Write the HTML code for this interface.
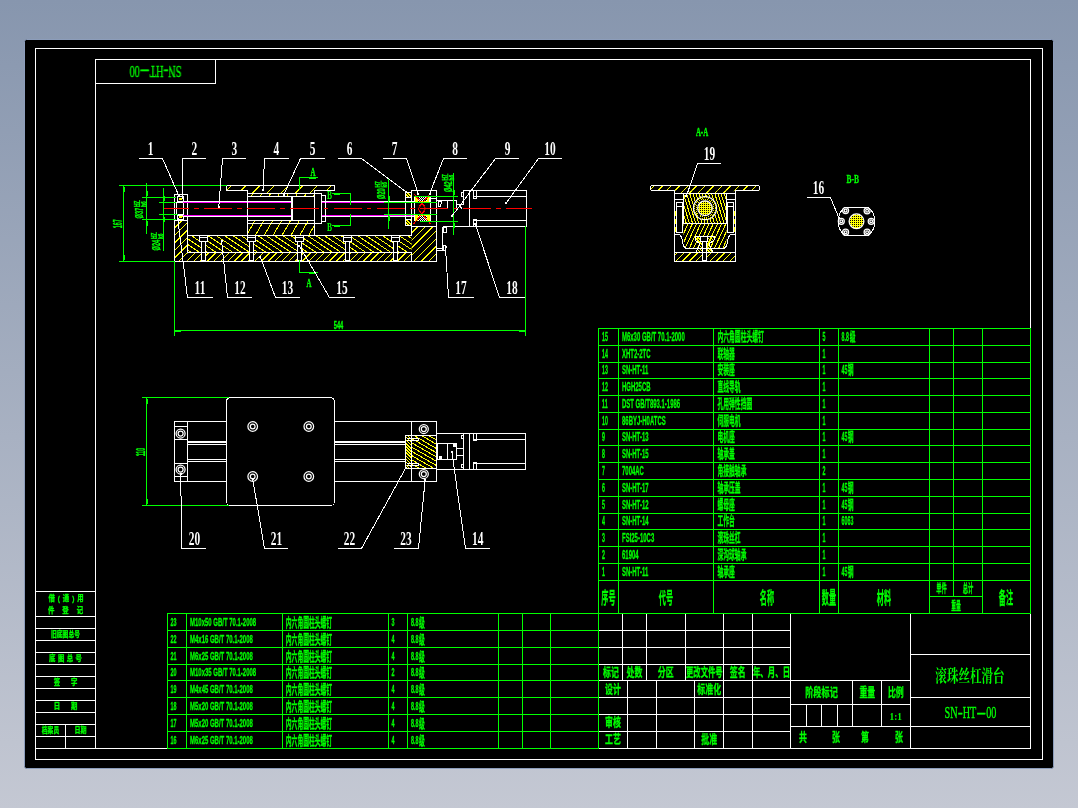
<!DOCTYPE html>
<html lang="zh"><head><meta charset="utf-8"><title>滚珠丝杠滑台 SN-HT-00</title>
<style>html,body{margin:0;padding:0;background:#8c9ab2;overflow:hidden}svg{display:block}text{white-space:pre}</style></head><body>
<svg width="1078" height="808" viewBox="0 0 1078 808">
<defs>
<linearGradient id="bg" x1="0" y1="0" x2="0" y2="1"><stop offset="0" stop-color="#8796ae"/><stop offset="1" stop-color="#c4c8d3"/></linearGradient>
<pattern id="dots" width="2" height="2" patternUnits="userSpaceOnUse"><rect x="0" y="0" width="2" height="2" fill="#ffff00"/><rect x="0" y="0" width="1" height="1" fill="#000"/></pattern>
</defs>
<rect x="0" y="0" width="1078" height="808" fill="url(#bg)"/>
<rect x="24.5" y="39.5" width="1029" height="729" rx="2" fill="#000" stroke="#8c9dbb" stroke-width="1"/>
<g shape-rendering="crispEdges" fill="none" stroke-width="1" stroke-linecap="square">
<rect x="35.5" y="48.5" width="1007" height="711" stroke="#ffffff" fill="none"/>
<rect x="95.5" y="59.5" width="935" height="689" stroke="#ffffff" fill="none"/>
<line x1="95.5" y1="83.5" x2="215.5" y2="83.5" stroke="#ffffff"/>
<line x1="215.5" y1="59.5" x2="215.5" y2="83.5" stroke="#ffffff"/>
<line x1="35.5" y1="591.5" x2="95.5" y2="591.5" stroke="#ffffff"/>
<line x1="35.5" y1="616.5" x2="95.5" y2="616.5" stroke="#ffffff"/>
<line x1="35.5" y1="628.5" x2="95.5" y2="628.5" stroke="#ffffff"/>
<line x1="35.5" y1="640.5" x2="95.5" y2="640.5" stroke="#ffffff"/>
<line x1="35.5" y1="652.5" x2="95.5" y2="652.5" stroke="#ffffff"/>
<line x1="35.5" y1="664.5" x2="95.5" y2="664.5" stroke="#ffffff"/>
<line x1="35.5" y1="676.5" x2="95.5" y2="676.5" stroke="#ffffff"/>
<line x1="35.5" y1="688.5" x2="95.5" y2="688.5" stroke="#ffffff"/>
<line x1="35.5" y1="700.5" x2="95.5" y2="700.5" stroke="#ffffff"/>
<line x1="35.5" y1="712.5" x2="95.5" y2="712.5" stroke="#ffffff"/>
<line x1="35.5" y1="724.5" x2="95.5" y2="724.5" stroke="#ffffff"/>
<line x1="35.5" y1="736.5" x2="95.5" y2="736.5" stroke="#ffffff"/>
<line x1="65.5" y1="724.5" x2="65.5" y2="748.5" stroke="#ffffff"/>
<line x1="35.5" y1="748.5" x2="95.5" y2="748.5" stroke="#ffffff"/>
<clipPath id="c1"><path d="M174.5 220.5 L187.5 220.5 L187.5 261.5 L174.5 261.5 Z"/></clipPath>
<path clip-path="url(#c1)" d="M151.51 243.34 L183.34 211.51 M155.29 247.12 L187.12 215.29 M159.08 250.9 L190.9 219.08 M162.86 254.69 L194.69 222.86 M166.64 258.47 L198.47 226.64 M170.43 262.25 L202.25 230.43 M174.21 266.04 L206.04 234.21 M177.99 269.82 L209.82 237.99" stroke="#ffff00" fill="none"/>
<clipPath id="c2"><path d="M187.5 252.5 L411.5 252.5 L411.5 261.5 L187.5 261.5 Z"/></clipPath>
<path clip-path="url(#c2)" d="M161.9 279.33 L321.83 119.4 M165.29 282.73 L325.23 122.79 M168.69 286.12 L328.62 126.19 M172.08 289.52 L332.02 129.58 M175.48 292.91 L335.41 132.98 M178.87 296.3 L338.8 136.37 M182.27 299.7 L342.2 139.77 M185.66 303.09 L345.59 143.16 M189.05 306.49 L348.99 146.55 M192.45 309.88 L352.38 149.95 M195.84 313.28 L355.78 153.34 M199.24 316.67 L359.17 156.74 M202.63 320.06 L362.56 160.13 M206.02 323.46 L365.96 163.52 M209.42 326.85 L369.35 166.92 M212.81 330.25 L372.75 170.31 M216.21 333.64 L376.14 173.71 M219.6 337.03 L379.53 177.1 M222.99 340.43 L382.93 180.49 M226.39 343.82 L386.32 183.89 M229.78 347.22 L389.72 187.28 M233.18 350.61 L393.11 190.68 M236.57 354 L396.5 194.07 M239.96 357.4 L399.9 197.46 M243.36 360.79 L403.29 200.86 M246.75 364.19 L406.69 204.25 M250.15 367.58 L410.08 207.65 M253.54 370.98 L413.48 211.04 M256.94 374.37 L416.87 214.44 M260.33 377.76 L420.26 217.83 M263.72 381.16 L423.66 221.22 M267.12 384.55 L427.05 224.62 M270.51 387.95 L430.45 228.01 M273.91 391.34 L433.84 231.41 M277.3 394.73 L437.23 234.8" stroke="#ffff00" fill="none"/>
<clipPath id="c3"><path d="M187.5 235.5 L411.5 235.5 L411.5 252.5 L187.5 252.5 Z"/></clipPath>
<path clip-path="url(#c3)" d="M243.22 124.79 L431.11 251.53 M240.62 128.64 L428.51 255.38 M238.02 132.5 L425.91 259.24 M235.42 136.35 L423.31 263.09 M232.82 140.21 L420.71 266.95 M230.22 144.06 L418.11 270.8 M227.62 147.92 L415.51 274.66 M225.02 151.77 L412.91 278.51 M222.42 155.63 L410.31 282.37 M219.82 159.48 L407.71 286.22 M217.21 163.34 L405.11 290.08 M214.61 167.19 L402.51 293.93 M212.01 171.05 L399.91 297.79 M209.41 174.91 L397.31 301.64 M206.81 178.76 L394.71 305.5 M204.21 182.62 L392.11 309.35 M201.61 186.47 L389.51 313.21 M199.01 190.33 L386.91 317.06 M196.41 194.18 L384.31 320.92 M193.81 198.04 L381.71 324.77 M191.21 201.89 L379.11 328.63 M188.61 205.75 L376.51 332.48 M186.01 209.6 L373.91 336.34 M183.41 213.46 L371.31 340.19 M180.81 217.31 L368.71 344.05 M178.21 221.17 L366.11 347.9 M175.61 225.02 L363.51 351.76 M173.01 228.88 L360.91 355.61 M170.41 232.73 L358.31 359.47 M167.81 236.59 L355.71 363.32" stroke="#ffff00" fill="none"/>
<clipPath id="c4"><path d="M411.5 226.5 L436.5 226.5 L436.5 261.5 L411.5 261.5 Z"/></clipPath>
<path clip-path="url(#c4)" d="M396.35 248.18 L428.18 216.35 M400.13 251.96 L431.96 220.13 M403.92 255.74 L435.74 223.92 M407.7 259.53 L439.53 227.7 M411.48 263.31 L443.31 231.48 M415.27 267.09 L447.09 235.27 M419.05 270.88 L450.88 239.05 M422.83 274.66 L454.66 242.83" stroke="#ffff00" fill="none"/>
<clipPath id="c5"><path d="M226.5 185.5 L334.5 185.5 L334.5 190.5 L314.5 190.5 L314.5 193.5 L247.5 193.5 L247.5 190.5 L226.5 190.5 Z"/></clipPath>
<path clip-path="url(#c5)" d="M215.03 202.02 L293.02 124.03 M222.17 209.16 L300.16 131.17 M229.31 216.3 L307.3 138.31 M236.46 223.45 L314.45 145.46 M243.6 230.59 L321.59 152.6 M250.74 237.73 L328.73 159.74 M257.88 244.87 L335.87 166.88 M265.02 252.01 L343.01 174.02" stroke="#ffff00" fill="none"/>
<clipPath id="c6"><path d="M247.5 193.5 L314.5 193.5 L314.5 196.5 L247.5 196.5 Z"/></clipPath>
<path clip-path="url(#c6)" d="M241.95 212.33 L276.48 152.52 M248.62 216.18 L283.15 156.37 M255.29 220.03 L289.82 160.22 M261.96 223.88 L296.49 164.07 M268.62 227.73 L303.16 167.92 M275.29 231.58 L309.83 171.77 M281.96 235.43 L316.49 175.62 M288.63 239.28 L323.16 179.47" stroke="#ffff00" fill="none"/>
<clipPath id="c7"><path d="M247.5 220.5 L314.5 220.5 L314.5 223.5 L247.5 223.5 Z"/></clipPath>
<path clip-path="url(#c7)" d="M243.6 240.28 L278.13 180.47 M250.26 244.13 L284.8 184.32 M256.93 247.98 L291.47 188.17 M263.6 251.83 L298.13 192.02 M270.27 255.68 L304.8 195.87 M276.94 259.53 L311.47 199.72 M283.61 263.38 L318.14 203.57" stroke="#ffff00" fill="none"/>
<clipPath id="c8"><path d="M247.5 223.5 L314.5 223.5 L314.5 235.5 L247.5 235.5 Z"/></clipPath>
<path clip-path="url(#c8)" d="M240.1 246.34 L275.13 185.66 M246.77 250.19 L281.8 189.51 M253.43 254.04 L288.47 193.36 M260.1 257.89 L295.14 197.21 M266.77 261.74 L301.8 201.06 M273.44 265.59 L308.47 204.91 M280.11 269.44 L315.14 208.76 M286.78 273.29 L321.81 212.61" stroke="#ffff00" fill="none"/>
<clipPath id="c9"><path d="M405.5 192.5 L411.5 192.5 L411.5 197.5 L405.5 197.5 Z"/></clipPath>
<path clip-path="url(#c9)" d="M407.18 189.39 L414.11 196.32 M405.62 190.94 L412.56 197.88 M404.06 192.5 L411 199.44 M402.51 194.05 L409.45 200.99" stroke="#ffff00" fill="none"/>
<clipPath id="c10"><path d="M405.5 219.5 L411.5 219.5 L411.5 225.5 L405.5 225.5 Z"/></clipPath>
<path clip-path="url(#c10)" d="M406.69 216.9 L414.1 224.31 M405.13 218.45 L412.55 225.87 M403.58 220.01 L410.99 227.42 M402.02 221.57 L409.43 228.98" stroke="#ffff00" fill="none"/>
<rect x="199.4" y="235.5" width="8" height="6.5" fill="#000" stroke="none"/>
<rect x="201.2" y="241.5" width="4.5" height="19" fill="#000" stroke="none"/>
<rect x="247.5" y="235.5" width="8" height="6.5" fill="#000" stroke="none"/>
<rect x="249.3" y="241.5" width="4.5" height="19" fill="#000" stroke="none"/>
<rect x="295.3" y="235.5" width="8" height="6.5" fill="#000" stroke="none"/>
<rect x="297.1" y="241.5" width="4.5" height="19" fill="#000" stroke="none"/>
<rect x="343.5" y="235.5" width="8" height="6.5" fill="#000" stroke="none"/>
<rect x="345.3" y="241.5" width="4.5" height="19" fill="#000" stroke="none"/>
<rect x="391.2" y="235.5" width="8" height="6.5" fill="#000" stroke="none"/>
<rect x="393" y="241.5" width="4.5" height="19" fill="#000" stroke="none"/>
<rect x="174.5" y="194.5" width="13" height="26" stroke="#ffffff" fill="none"/>
<line x1="174.5" y1="220.5" x2="174.5" y2="261.5" stroke="#ffffff"/>
<line x1="187.5" y1="220.5" x2="187.5" y2="252.5" stroke="#ffffff"/>
<line x1="174.5" y1="261.5" x2="436.5" y2="261.5" stroke="#ffffff"/>
<rect x="176.5" y="202.5" width="7" height="12" stroke="#ffffff" fill="none"/>
<rect x="177.5" y="196.5" width="6" height="5" stroke="#ffffff" fill="none"/>
<rect x="177.5" y="215.5" width="6" height="4" stroke="#ffffff" fill="none"/>
<line x1="179.5" y1="198.5" x2="182.5" y2="198.5" stroke="#ffff00"/>
<line x1="179.5" y1="199.5" x2="181.5" y2="199.5" stroke="#ffff00"/>
<line x1="179.5" y1="216.5" x2="182.5" y2="216.5" stroke="#ffff00"/>
<line x1="179.5" y1="217.5" x2="181.5" y2="217.5" stroke="#ffff00"/>
<line x1="187.5" y1="235.5" x2="411.5" y2="235.5" stroke="#ffffff"/>
<line x1="187.5" y1="252.5" x2="411.5" y2="252.5" stroke="#ffffff"/>
<path d="M199.4 235.5 L199.4 241.5 L207.4 241.5 L207.4 235.5" stroke="#ffffff" fill="none"/>
<line x1="199.4" y1="237.5" x2="207.4" y2="237.5" stroke="#ffffff"/>
<path d="M201.4 241.5 L201.4 260.5 L205.4 260.5 L205.4 241.5" stroke="#ffffff" fill="none"/>
<path d="M247.5 235.5 L247.5 241.5 L255.5 241.5 L255.5 235.5" stroke="#ffffff" fill="none"/>
<line x1="247.5" y1="237.5" x2="255.5" y2="237.5" stroke="#ffffff"/>
<path d="M249.5 241.5 L249.5 260.5 L253.5 260.5 L253.5 241.5" stroke="#ffffff" fill="none"/>
<path d="M295.3 235.5 L295.3 241.5 L303.3 241.5 L303.3 235.5" stroke="#ffffff" fill="none"/>
<line x1="295.3" y1="237.5" x2="303.3" y2="237.5" stroke="#ffffff"/>
<path d="M297.3 241.5 L297.3 260.5 L301.3 260.5 L301.3 241.5" stroke="#ffffff" fill="none"/>
<path d="M343.5 235.5 L343.5 241.5 L351.5 241.5 L351.5 235.5" stroke="#ffffff" fill="none"/>
<line x1="343.5" y1="237.5" x2="351.5" y2="237.5" stroke="#ffffff"/>
<path d="M345.5 241.5 L345.5 260.5 L349.5 260.5 L349.5 241.5" stroke="#ffffff" fill="none"/>
<path d="M391.2 235.5 L391.2 241.5 L399.2 241.5 L399.2 235.5" stroke="#ffffff" fill="none"/>
<line x1="391.2" y1="237.5" x2="399.2" y2="237.5" stroke="#ffffff"/>
<path d="M393.2 241.5 L393.2 260.5 L397.2 260.5 L397.2 241.5" stroke="#ffffff" fill="none"/>
<line x1="183.5" y1="201.5" x2="291.5" y2="201.5" stroke="#ffffff"/>
<line x1="183.5" y1="202.5" x2="291.5" y2="202.5" stroke="#ff00ff"/>
<line x1="183.5" y1="215.5" x2="291.5" y2="215.5" stroke="#ff00ff"/>
<line x1="183.5" y1="216.5" x2="291.5" y2="216.5" stroke="#ffffff"/>
<line x1="321.5" y1="201.5" x2="413.5" y2="201.5" stroke="#ffffff"/>
<line x1="321.5" y1="202.5" x2="413.5" y2="202.5" stroke="#ff00ff"/>
<line x1="321.5" y1="215.5" x2="413.5" y2="215.5" stroke="#ff00ff"/>
<line x1="321.5" y1="216.5" x2="413.5" y2="216.5" stroke="#ffffff"/>
<path d="M226.5 185.5 L334.5 185.5 L334.5 190.5 L314.5 190.5 L314.5 193.5" stroke="#ffffff" fill="none"/>
<path d="M226.5 185.5 L226.5 190.5 L247.5 190.5 L247.5 235.5" stroke="#ffffff" fill="none"/>
<line x1="247.5" y1="193.5" x2="314.5" y2="193.5" stroke="#ffffff"/>
<line x1="247.5" y1="196.5" x2="314.5" y2="196.5" stroke="#ffffff"/>
<line x1="247.5" y1="220.5" x2="314.5" y2="220.5" stroke="#ffffff"/>
<line x1="247.5" y1="223.5" x2="321.5" y2="223.5" stroke="#ffffff"/>
<line x1="314.5" y1="190.5" x2="314.5" y2="235.5" stroke="#ffffff"/>
<rect x="291.5" y="196.5" width="23" height="24" stroke="#ffffff" fill="none"/>
<line x1="292.5" y1="196.5" x2="292.5" y2="220.5" stroke="#ffffff"/>
<path d="M314.5 193.5 L321.5 193.5 L321.5 223.5" stroke="#ffffff" fill="none"/>
<path d="M321.5 195.5 L325.5 195.5 L325.5 221.5 L321.5 221.5" stroke="#ffffff" fill="none"/>
<path d="M411.5 235.5 L411.5 190.5 L436.5 190.5 L436.5 261.5" stroke="#ffffff" fill="none"/>
<line x1="411.5" y1="226.5" x2="436.5" y2="226.5" stroke="#ffffff"/>
<line x1="411.5" y1="252.5" x2="411.5" y2="261.5" stroke="#ffffff"/>
<path d="M411.5 192.5 L405.5 192.5 L405.5 225.5 L411.5 225.5" stroke="#ffffff" fill="none"/>
<line x1="405.5" y1="197.5" x2="411.5" y2="197.5" stroke="#ffffff"/>
<line x1="405.5" y1="219.5" x2="411.5" y2="219.5" stroke="#ffffff"/>
<line x1="417" y1="197.5" x2="429.5" y2="197.5" stroke="#fff" stroke-dasharray="1 1" stroke-linecap="butt"/>
<line x1="415" y1="197.5" x2="417.5" y2="197.5" stroke="#ffff00"/>
<line x1="427" y1="197.5" x2="429.5" y2="197.5" stroke="#ffff00"/>
<line x1="418" y1="198.5" x2="429.5" y2="198.5" stroke="#fff" stroke-dasharray="1 1" stroke-linecap="butt"/>
<line x1="415" y1="198.5" x2="417.5" y2="198.5" stroke="#ffff00"/>
<line x1="427" y1="198.5" x2="429.5" y2="198.5" stroke="#ffff00"/>
<line x1="417" y1="199.5" x2="429.5" y2="199.5" stroke="#fff" stroke-dasharray="1 1" stroke-linecap="butt"/>
<line x1="415" y1="199.5" x2="417.5" y2="199.5" stroke="#ffff00"/>
<line x1="427" y1="199.5" x2="429.5" y2="199.5" stroke="#ffff00"/>
<line x1="418" y1="200.5" x2="429.5" y2="200.5" stroke="#fff" stroke-dasharray="1 1" stroke-linecap="butt"/>
<line x1="415" y1="200.5" x2="417.5" y2="200.5" stroke="#ffff00"/>
<line x1="427" y1="200.5" x2="429.5" y2="200.5" stroke="#ffff00"/>
<line x1="417" y1="201.5" x2="429.5" y2="201.5" stroke="#fff" stroke-dasharray="1 1" stroke-linecap="butt"/>
<line x1="415" y1="201.5" x2="417.5" y2="201.5" stroke="#ffff00"/>
<line x1="427" y1="201.5" x2="429.5" y2="201.5" stroke="#ffff00"/>
<line x1="417" y1="215.5" x2="429.5" y2="215.5" stroke="#fff" stroke-dasharray="1 1" stroke-linecap="butt"/>
<line x1="415" y1="215.5" x2="417.5" y2="215.5" stroke="#ffff00"/>
<line x1="427" y1="215.5" x2="429.5" y2="215.5" stroke="#ffff00"/>
<line x1="418" y1="216.5" x2="429.5" y2="216.5" stroke="#fff" stroke-dasharray="1 1" stroke-linecap="butt"/>
<line x1="415" y1="216.5" x2="417.5" y2="216.5" stroke="#ffff00"/>
<line x1="427" y1="216.5" x2="429.5" y2="216.5" stroke="#ffff00"/>
<line x1="417" y1="217.5" x2="429.5" y2="217.5" stroke="#fff" stroke-dasharray="1 1" stroke-linecap="butt"/>
<line x1="415" y1="217.5" x2="417.5" y2="217.5" stroke="#ffff00"/>
<line x1="427" y1="217.5" x2="429.5" y2="217.5" stroke="#ffff00"/>
<line x1="418" y1="218.5" x2="429.5" y2="218.5" stroke="#fff" stroke-dasharray="1 1" stroke-linecap="butt"/>
<line x1="415" y1="218.5" x2="417.5" y2="218.5" stroke="#ffff00"/>
<line x1="427" y1="218.5" x2="429.5" y2="218.5" stroke="#ffff00"/>
<line x1="417" y1="219.5" x2="429.5" y2="219.5" stroke="#fff" stroke-dasharray="1 1" stroke-linecap="butt"/>
<line x1="415" y1="219.5" x2="417.5" y2="219.5" stroke="#ffff00"/>
<line x1="427" y1="219.5" x2="429.5" y2="219.5" stroke="#ffff00"/>
<line x1="418" y1="220.5" x2="429.5" y2="220.5" stroke="#fff" stroke-dasharray="1 1" stroke-linecap="butt"/>
<line x1="415" y1="220.5" x2="417.5" y2="220.5" stroke="#ffff00"/>
<line x1="427" y1="220.5" x2="429.5" y2="220.5" stroke="#ffff00"/>
<line x1="419" y1="215.5" x2="426" y2="215.5" stroke="#ffff00"/>
<line x1="419" y1="201.5" x2="426" y2="201.5" stroke="#ffff00"/>
<rect x="429.5" y="198.5" width="7" height="4" stroke="#ffffff" fill="none"/>
<line x1="414.5" y1="196.5" x2="414.5" y2="220.5" stroke="#ffffff"/>
<line x1="430.5" y1="196.5" x2="430.5" y2="220.5" stroke="#ffffff"/>
<path d="M436.5 200.5 L456.5 200.5 L456.5 208.5" stroke="#ffffff" fill="none"/>
<line x1="447.5" y1="200.5" x2="447.5" y2="208.5" stroke="#ffffff"/>
<path d="M438.5 201.5 L441.5 201.5 L440.5 206.5 L438.5 206.5 L438.5 201.5" stroke="#ffffff" fill="none"/>
<path d="M456.5 204.5 L463.5 204.5" stroke="#ffffff" fill="none"/>
<line x1="459.5" y1="204.5" x2="461.5" y2="208.5" stroke="#ffffff"/>
<path d="M463.5 204.5 L463.5 190.5 L526.5 190.5 L526.5 226.5 L443.5 226.5" stroke="#ffffff" fill="none"/>
<path d="M463.5 192.5 L461.5 192.5 L461.5 196.5 L463.5 196.5" stroke="#ffffff" fill="none"/>
<line x1="469.5" y1="190.5" x2="469.5" y2="226.5" stroke="#ffffff"/>
<line x1="473.5" y1="196.5" x2="526.5" y2="196.5" stroke="#ffffff"/>
<line x1="473.5" y1="220.5" x2="526.5" y2="220.5" stroke="#ffffff"/>
<rect x="473.5" y="190.5" width="3" height="8" stroke="#ffffff" fill="none"/>
<rect x="473.5" y="219.5" width="3" height="7" stroke="#ffffff" fill="none"/>
<path d="M443.5 226.5 L442.5 227.5 L442.5 250.5" stroke="#ffffff" fill="none"/>
<line x1="436.5" y1="248.5" x2="442.5" y2="248.5" stroke="#ffffff"/>
<line x1="436.5" y1="250.5" x2="445.5" y2="250.5" stroke="#ffffff"/>
<rect x="443.5" y="227.5" width="3" height="5" stroke="#ffffff" fill="none"/>
<rect x="443.5" y="245.5" width="2" height="5" stroke="#ffffff" fill="none"/>
<path d="M418.5 208.5 L422 203.5 L425.5 208.5 L422 213.5 Z" stroke="#ff0000" fill="none" shape-rendering="geometricPrecision"/>
<line x1="414" y1="194" x2="424" y2="205.5" stroke="#ff0000"/>
<line x1="430" y1="194" x2="420" y2="205.5" stroke="#ff0000"/>
<line x1="414" y1="223.5" x2="424" y2="211.5" stroke="#ff0000"/>
<line x1="430" y1="223.5" x2="420" y2="211.5" stroke="#ff0000"/>
<line x1="164" y1="208.5" x2="532" y2="208.5" stroke="#ff0000" stroke-dasharray="28.2 5 4.5 5.5" stroke-dashoffset="3.2" stroke-linecap="butt"/>
<line x1="119.5" y1="185.5" x2="226.5" y2="185.5" stroke="#00ff00"/>
<line x1="119.5" y1="261.5" x2="174.5" y2="261.5" stroke="#00ff00"/>
<line x1="123.5" y1="185.5" x2="123.5" y2="261.5" stroke="#00ff00"/>
<line x1="146.5" y1="183.5" x2="146.5" y2="233.5" stroke="#00ff00"/>
<line x1="163.5" y1="188.5" x2="163.5" y2="250.5" stroke="#00ff00"/>
<line x1="142.5" y1="197.5" x2="175.5" y2="197.5" stroke="#00ff00"/>
<line x1="159.5" y1="202.5" x2="175.5" y2="202.5" stroke="#00ff00"/>
<line x1="159.5" y1="214.5" x2="177.5" y2="214.5" stroke="#00ff00"/>
<line x1="142.5" y1="219.5" x2="175.5" y2="219.5" stroke="#00ff00"/>
<line x1="174.5" y1="261.5" x2="174.5" y2="335.5" stroke="#00ff00"/>
<line x1="525.5" y1="226.5" x2="525.5" y2="335.5" stroke="#00ff00"/>
<line x1="174.5" y1="330.5" x2="525.5" y2="330.5" stroke="#00ff00"/>
<rect x="122.5" y="187" width="2" height="5" fill="#00ff00" stroke="none"/>
<rect x="122.5" y="255" width="2" height="5" fill="#00ff00" stroke="none"/>
<rect x="145.5" y="191" width="2" height="5" fill="#00ff00" stroke="none"/>
<rect x="145.5" y="220.5" width="2" height="5" fill="#00ff00" stroke="none"/>
<rect x="162.5" y="195.5" width="2" height="5" fill="#00ff00" stroke="none"/>
<rect x="162.5" y="217" width="2" height="5" fill="#00ff00" stroke="none"/>
<rect x="387.5" y="196" width="2" height="5" fill="#00ff00" stroke="none"/>
<rect x="387.5" y="216" width="2" height="5" fill="#00ff00" stroke="none"/>
<rect x="452.5" y="190" width="2" height="5" fill="#00ff00" stroke="none"/>
<rect x="452.5" y="223" width="2" height="5" fill="#00ff00" stroke="none"/>
<rect x="175" y="329.5" width="6" height="2" fill="#00ff00" stroke="none"/>
<rect x="519" y="329.5" width="6" height="2" fill="#00ff00" stroke="none"/>
<line x1="388.5" y1="179.5" x2="388.5" y2="228.5" stroke="#00ff00"/>
<line x1="384.5" y1="202.5" x2="436.5" y2="202.5" stroke="#00ff00"/>
<line x1="384.5" y1="214.5" x2="436.5" y2="214.5" stroke="#00ff00"/>
<line x1="414.5" y1="196.5" x2="457.5" y2="196.5" stroke="#00ff00"/>
<line x1="420.5" y1="221.5" x2="457.5" y2="221.5" stroke="#00ff00"/>
<line x1="453.5" y1="173.5" x2="453.5" y2="234.5" stroke="#00ff00"/>
<path d="M299.5 189.5 L299.5 177.5 L317.5 177.5" stroke="#00ff00" fill="none"/>
<path d="M299.5 260.5 L299.5 272.5 L317.5 272.5" stroke="#00ff00" fill="none"/>
<rect x="309" y="176.5" width="7" height="2" fill="#00ff00" stroke="none"/>
<rect x="309" y="271.5" width="7" height="2" fill="#00ff00" stroke="none"/>
<path d="M332.5 193.5 L350.5 193.5 L350.5 204.5" stroke="#00ff00" fill="none"/>
<path d="M332.5 225.5 L350.5 225.5 L350.5 214.5" stroke="#00ff00" fill="none"/>
<rect x="334" y="192.5" width="6" height="2" fill="#00ff00" stroke="none"/>
<rect x="334" y="224.5" width="6" height="2" fill="#00ff00" stroke="none"/>
<line x1="139.5" y1="158.5" x2="162.5" y2="158.5" stroke="#ffffff"/>
<line x1="162.5" y1="158.5" x2="179" y2="196" stroke="#ffffff"/>
<rect x="178" y="195" width="2" height="2" fill="#fff" stroke="none"/>
<line x1="182.5" y1="158.5" x2="205.5" y2="158.5" stroke="#ffffff"/>
<line x1="182.5" y1="158.5" x2="182.5" y2="197.5" stroke="#ffffff"/>
<rect x="181.5" y="196.5" width="2" height="2" fill="#fff" stroke="none"/>
<line x1="222.5" y1="158.5" x2="245.5" y2="158.5" stroke="#ffffff"/>
<line x1="222.5" y1="158.5" x2="218.8" y2="207" stroke="#ffffff"/>
<rect x="217.8" y="206" width="2" height="2" fill="#fff" stroke="none"/>
<line x1="264.5" y1="158.5" x2="288.5" y2="158.5" stroke="#ffffff"/>
<line x1="264.5" y1="158.5" x2="263" y2="190" stroke="#ffffff"/>
<rect x="262" y="189" width="2" height="2" fill="#fff" stroke="none"/>
<line x1="300.5" y1="158.5" x2="324.5" y2="158.5" stroke="#ffffff"/>
<line x1="300.5" y1="158.5" x2="283.7" y2="194.8" stroke="#ffffff"/>
<rect x="282.7" y="193.8" width="2" height="2" fill="#fff" stroke="none"/>
<line x1="338.5" y1="158.5" x2="361.5" y2="158.5" stroke="#ffffff"/>
<line x1="361.5" y1="158.5" x2="406.3" y2="192" stroke="#ffffff"/>
<rect x="405.3" y="191" width="2" height="2" fill="#fff" stroke="none"/>
<line x1="383.5" y1="158.5" x2="406.5" y2="158.5" stroke="#ffffff"/>
<line x1="406.5" y1="158.5" x2="418.3" y2="194" stroke="#ffffff"/>
<rect x="417.3" y="193" width="2" height="2" fill="#fff" stroke="none"/>
<line x1="443.5" y1="158.5" x2="466.5" y2="158.5" stroke="#ffffff"/>
<line x1="443.5" y1="158.5" x2="429.5" y2="194" stroke="#ffffff"/>
<rect x="428.5" y="193" width="2" height="2" fill="#fff" stroke="none"/>
<line x1="495.5" y1="158.5" x2="518.5" y2="158.5" stroke="#ffffff"/>
<line x1="495.5" y1="158.5" x2="452" y2="216" stroke="#ffffff"/>
<rect x="451" y="215" width="2" height="2" fill="#fff" stroke="none"/>
<line x1="538.5" y1="158.5" x2="561.5" y2="158.5" stroke="#ffffff"/>
<line x1="538.5" y1="158.5" x2="506.2" y2="203" stroke="#ffffff"/>
<rect x="505.2" y="202" width="2" height="2" fill="#fff" stroke="none"/>
<line x1="187.5" y1="297.5" x2="212.5" y2="297.5" stroke="#ffffff"/>
<line x1="187.5" y1="297.5" x2="177.8" y2="219" stroke="#ffffff"/>
<rect x="176.8" y="218" width="2" height="2" fill="#fff" stroke="none"/>
<line x1="227.5" y1="297.5" x2="251.5" y2="297.5" stroke="#ffffff"/>
<line x1="227.5" y1="297.5" x2="221.6" y2="241" stroke="#ffffff"/>
<rect x="220.6" y="240" width="2" height="2" fill="#fff" stroke="none"/>
<line x1="275.5" y1="297.5" x2="299.5" y2="297.5" stroke="#ffffff"/>
<line x1="275.5" y1="297.5" x2="260.3" y2="256.7" stroke="#ffffff"/>
<rect x="259.3" y="255.7" width="2" height="2" fill="#fff" stroke="none"/>
<line x1="329.5" y1="297.5" x2="354.5" y2="297.5" stroke="#ffffff"/>
<line x1="329.5" y1="297.5" x2="299.3" y2="245.6" stroke="#ffffff"/>
<rect x="298.3" y="244.6" width="2" height="2" fill="#fff" stroke="none"/>
<line x1="448.5" y1="297.5" x2="473.5" y2="297.5" stroke="#ffffff"/>
<line x1="448.5" y1="297.5" x2="445.5" y2="246.8" stroke="#ffffff"/>
<rect x="444.5" y="245.8" width="2" height="2" fill="#fff" stroke="none"/>
<line x1="499.5" y1="297.5" x2="524.5" y2="297.5" stroke="#ffffff"/>
<line x1="499.5" y1="297.5" x2="475.2" y2="223.6" stroke="#ffffff"/>
<rect x="474.2" y="222.6" width="2" height="2" fill="#fff" stroke="none"/>
<clipPath id="c11"><path d="M650.5 185.5 L759.5 185.5 L759.5 190.5 L650.5 190.5 Z"/></clipPath>
<path clip-path="url(#c11)" d="M639.24 200.81 L717.81 122.24 M643.48 205.05 L722.05 126.48 M647.72 209.29 L726.29 130.72 M651.96 213.53 L730.53 134.96 M656.21 217.78 L734.78 139.21 M660.45 222.02 L739.02 143.45 M664.69 226.26 L743.26 147.69 M668.93 230.5 L747.5 151.93 M673.18 234.75 L751.75 156.18 M677.42 238.99 L755.99 160.42 M681.66 243.23 L760.23 164.66 M685.91 247.48 L764.48 168.91 M690.15 251.72 L768.72 173.15 M694.39 255.96 L772.96 177.39" stroke="#ffff00" fill="none"/>
<clipPath id="c12"><path d="M674.5 252.5 L735.5 252.5 L735.5 261.5 L674.5 261.5 Z"/></clipPath>
<path clip-path="url(#c12)" d="M666.49 263.5 L711.5 218.49 M669.88 266.89 L714.89 221.88 M673.27 270.29 L718.29 225.27 M676.67 273.68 L721.68 228.67 M680.06 277.08 L725.08 232.06 M683.46 280.47 L728.47 235.46 M686.85 283.87 L731.87 238.85 M690.24 287.26 L735.26 242.24 M693.64 290.65 L738.65 245.64 M697.03 294.05 L742.05 249.03" stroke="#ffff00" fill="none"/>
<clipPath id="c13"><path d="M683.5 193.5 L726.5 193.5 L726.5 223.5 L683.5 223.5 Z"/></clipPath>
<path clip-path="url(#c13)" d="M718.81 175.82 L734.73 227.87 M715.94 176.7 L731.86 228.75 M713.08 177.57 L728.99 229.62 M710.21 178.45 L726.12 230.5 M707.34 179.33 L723.25 231.38 M704.47 180.2 L720.38 232.26 M701.6 181.08 L717.51 233.13 M698.73 181.96 L714.64 234.01 M695.86 182.83 L711.78 234.89 M692.99 183.71 L708.91 235.76 M690.12 184.59 L706.04 236.64 M687.25 185.47 L703.17 237.52 M684.39 186.34 L700.3 238.4 M681.52 187.22 L697.43 239.27 M678.65 188.1 L694.56 240.15 M675.78 188.97 L691.69 241.03 M672.91 189.85 L688.82 241.9" stroke="#ffff00" fill="none"/>
<clipPath id="c14"><path d="M683.5 223.5 L726.5 223.5 L726.5 240 L724.5 248.5 L685.5 248.5 L683.5 240 Z"/></clipPath>
<path clip-path="url(#c14)" d="M672.06 249.18 L693.92 202.29 M675.5 250.79 L697.37 203.9 M678.95 252.39 L700.81 205.5 M682.39 254 L704.26 207.11 M685.83 255.61 L707.7 208.71 M689.28 257.21 L711.14 210.32 M692.72 258.82 L714.59 211.93 M696.17 260.42 L718.03 213.53 M699.61 262.03 L721.48 215.14 M703.05 263.64 L724.92 216.74 M706.5 265.24 L728.36 218.35 M709.94 266.85 L731.81 219.96 M713.39 268.45 L735.25 221.56 M716.83 270.06 L738.7 223.17" stroke="#ffff00" fill="none"/>
<clipPath id="c15"><path d="M674.5 190.5 L735.5 190.5 L726.5 193.5 L683.5 193.5 Z"/></clipPath>
<path clip-path="url(#c15)" d="M666.95 198.55 L711.55 153.95 M671.19 202.79 L715.79 158.19 M675.43 207.03 L720.03 162.43 M679.68 211.28 L724.28 166.68 M683.92 215.52 L728.52 170.92 M688.16 219.76 L732.76 175.16 M692.41 224.01 L737.01 179.41 M696.65 228.25 L741.25 183.65" stroke="#ffff00" fill="none"/>
<clipPath id="c16"><path d="M695 236 L714 236 L714 240 L709 244 L713 252.5 L696 252.5 L700 244 L695 240 Z"/></clipPath>
<path clip-path="url(#c16)" d="M702.78 226.76 L721.99 245.97 M701.23 228.31 L720.44 247.52 M699.67 229.87 L718.88 249.08 M698.12 231.43 L717.32 250.63 M696.56 232.98 L715.77 252.19 M695 234.54 L714.21 253.75 M693.45 236.09 L712.66 255.3 M691.89 237.65 L711.1 256.86 M690.34 239.2 L709.55 258.41 M688.78 240.76 L707.99 259.97 M687.23 242.32 L706.43 261.52 M685.67 243.87 L704.88 263.08" stroke="#ffff00" fill="none"/>
<rect x="700.5" y="236.5" width="7" height="5.5" fill="#000" stroke="none"/>
<rect x="702.5" y="241.5" width="4" height="19" fill="#000" stroke="none"/>
<path d="M651.5 185.5 L758.5 185.5 L759.5 186.5 L759.5 189.5 L758.5 190.5 L735.5 190.5 L735.5 261.5 L674.5 261.5 L674.5 190.5 L651.5 190.5 L650.5 189.5 L650.5 186.5 Z" stroke="#ffffff" fill="none"/>
<line x1="674.5" y1="252.5" x2="735.5" y2="252.5" stroke="#ffffff"/>
<line x1="674.5" y1="193.5" x2="735.5" y2="193.5" stroke="#ffffff"/>
<line x1="683.5" y1="193.5" x2="683.5" y2="223.5" stroke="#ffffff"/>
<line x1="726.5" y1="193.5" x2="726.5" y2="223.5" stroke="#ffffff"/>
<line x1="683.5" y1="223.5" x2="726.5" y2="223.5" stroke="#ffffff"/>
<circle cx="705" cy="208.2" r="11.5" stroke="#ffffff" fill="#000" stroke-width="1.25" shape-rendering="geometricPrecision"/>
<circle cx="705" cy="208.2" r="10.5" stroke="#ffff00" fill="none" stroke-dasharray="1 1" stroke-linecap="butt"/>
<circle cx="705" cy="208.2" r="9" stroke="#ffff00" fill="none" stroke-dasharray="1 1" stroke-linecap="butt"/>
<circle cx="705" cy="208.2" r="7.3" stroke="#ffffff" fill="url(#dots)" stroke-width="1.25" shape-rendering="geometricPrecision"/>
<path d="M674.5 234.5 L679.5 234.5 L681.5 237 L683.5 246 L686 248.5 L724 248.5 L726.5 246 L728.5 237 L730.5 234.5 L735.5 234.5" stroke="#ffffff" fill="none"/>
<rect x="676.5" y="202.5" width="6" height="30" stroke="#ffffff" fill="none"/>
<line x1="676.5" y1="206.5" x2="682.5" y2="206.5" stroke="#ffffff"/>
<rect x="727.5" y="202.5" width="6" height="30" stroke="#ffffff" fill="none"/>
<line x1="727.5" y1="206.5" x2="733.5" y2="206.5" stroke="#ffffff"/>
<line x1="675.5" y1="199.5" x2="683.5" y2="199.5" stroke="#ffffff"/>
<line x1="726.5" y1="199.5" x2="734.5" y2="199.5" stroke="#ffffff"/>
<line x1="675.5" y1="211" x2="675.5" y2="215" stroke="#ffff00"/>
<line x1="734.5" y1="211" x2="734.5" y2="215" stroke="#ffff00"/>
<line x1="675.5" y1="219" x2="675.5" y2="223" stroke="#ffff00"/>
<line x1="734.5" y1="219" x2="734.5" y2="223" stroke="#ffff00"/>
<line x1="675.5" y1="227" x2="675.5" y2="231" stroke="#ffff00"/>
<line x1="734.5" y1="227" x2="734.5" y2="231" stroke="#ffff00"/>
<path d="M695 240 L695 236 L714 236 L714 240 L709 244 L713 252.5" stroke="#ffffff" fill="none"/>
<path d="M695 240 L700 244 L696 252.5" stroke="#ffffff" fill="none"/>
<rect x="700.5" y="236.5" width="7" height="5" stroke="#ffffff" fill="none"/>
<path d="M702.5 241.5 L702.5 260.5 L706.5 260.5 L706.5 241.5" stroke="#ffffff" fill="none"/>
<line x1="697.5" y1="163.5" x2="720.5" y2="163.5" stroke="#ffffff"/>
<line x1="697.5" y1="163.5" x2="686.4" y2="196.2" stroke="#ffffff"/>
<rect x="685.4" y="195.2" width="2" height="2" fill="#fff" stroke="none"/>
<path d="M868.08 207 A18.4 18.4 0 0 1 868.08 235.6 L844.92 235.6 A18.4 18.4 0 0 1 844.92 207 Z" stroke="#fff" fill="none"/>
<circle cx="856.5" cy="221.3" r="7.4" stroke="#ffffff" fill="url(#dots)" stroke-width="1.25" shape-rendering="geometricPrecision"/>
<circle cx="871.2" cy="221.3" r="3" stroke="#ffffff" fill="none" stroke-width="1.25" shape-rendering="geometricPrecision"/>
<circle cx="871.2" cy="221.3" r="1.4" stroke="#ffffff" fill="none" stroke-width="1.25" shape-rendering="geometricPrecision"/>
<circle cx="841.3" cy="221.3" r="3" stroke="#ffffff" fill="none" stroke-width="1.25" shape-rendering="geometricPrecision"/>
<circle cx="841.3" cy="221.3" r="1.4" stroke="#ffffff" fill="none" stroke-width="1.25" shape-rendering="geometricPrecision"/>
<circle cx="867.1" cy="210.8" r="3" stroke="#ffffff" fill="none" stroke-width="1.25" shape-rendering="geometricPrecision"/>
<circle cx="867.1" cy="210.8" r="1.4" stroke="#ffffff" fill="none" stroke-width="1.25" shape-rendering="geometricPrecision"/>
<circle cx="845.6" cy="210.6" r="3" stroke="#ffffff" fill="none" stroke-width="1.25" shape-rendering="geometricPrecision"/>
<circle cx="845.6" cy="210.6" r="1.4" stroke="#ffffff" fill="none" stroke-width="1.25" shape-rendering="geometricPrecision"/>
<circle cx="867.1" cy="232.2" r="3" stroke="#ffffff" fill="none" stroke-width="1.25" shape-rendering="geometricPrecision"/>
<circle cx="867.1" cy="232.2" r="1.4" stroke="#ffffff" fill="none" stroke-width="1.25" shape-rendering="geometricPrecision"/>
<circle cx="845.6" cy="232.2" r="3" stroke="#ffffff" fill="none" stroke-width="1.25" shape-rendering="geometricPrecision"/>
<circle cx="845.6" cy="232.2" r="1.4" stroke="#ffffff" fill="none" stroke-width="1.25" shape-rendering="geometricPrecision"/>
<line x1="807.5" y1="197.5" x2="830.5" y2="197.5" stroke="#ffffff"/>
<line x1="830.5" y1="197.5" x2="839" y2="218.2" stroke="#ffffff"/>
<rect x="838" y="217.2" width="2" height="2" fill="#fff" stroke="none"/>
<clipPath id="c17"><path d="M405.5 435.5 L411.5 435.5 L411.5 468.5 L405.5 468.5 Z"/></clipPath>
<path clip-path="url(#c17)" d="M405.24 430.13 L430.37 455.26 M403.68 431.69 L428.81 456.82 M402.13 433.24 L427.26 458.37 M400.57 434.8 L425.7 459.93 M399.02 436.35 L424.15 461.48 M397.46 437.91 L422.59 463.04 M395.91 439.46 L421.04 464.59 M394.35 441.02 L419.48 466.15 M392.79 442.57 L417.93 467.71 M391.24 444.13 L416.37 469.26 M389.68 445.69 L414.81 470.82 M388.13 447.24 L413.26 472.37 M386.57 448.8 L411.7 473.93" stroke="#ffff00" fill="none"/>
<clipPath id="c18"><path d="M411.5 435.5 L436.5 435.5 L436.5 468.5 L411.5 468.5 Z"/></clipPath>
<path clip-path="url(#c18)" d="M415.38 423.53 L452.96 445.23 M413.53 426.74 L451.11 448.44 M411.68 429.94 L449.26 451.64 M409.83 433.14 L447.41 454.85 M407.98 436.35 L445.56 458.05 M406.13 439.55 L443.71 461.25 M404.28 442.76 L441.86 464.46 M402.43 445.96 L440.01 467.66 M400.58 449.17 L438.16 470.87 M398.73 452.37 L436.31 474.07 M396.88 455.57 L434.46 477.28 M395.03 458.78 L432.61 480.48" stroke="#ffff00" fill="none"/>
<line x1="142.5" y1="397.5" x2="229.5" y2="397.5" stroke="#00ff00"/>
<line x1="142.5" y1="505.5" x2="229.5" y2="505.5" stroke="#00ff00"/>
<line x1="146.5" y1="397.5" x2="146.5" y2="505.5" stroke="#00ff00"/>
<rect x="145.5" y="399" width="2" height="5" fill="#00ff00" stroke="none"/>
<rect x="145.5" y="499" width="2" height="5" fill="#00ff00" stroke="none"/>
<rect x="226.5" y="397.5" width="108" height="108" rx="4" stroke="#fff" fill="none"/>
<path d="M226.5 421.5 L174.5 421.5 L174.5 481.5 L226.5 481.5" stroke="#ffffff" fill="none"/>
<line x1="187.5" y1="421.5" x2="187.5" y2="481.5" stroke="#ffffff"/>
<line x1="174.5" y1="426.5" x2="187.5" y2="426.5" stroke="#ffffff"/>
<line x1="174.5" y1="439.5" x2="187.5" y2="439.5" stroke="#ffffff"/>
<line x1="174.5" y1="463.5" x2="187.5" y2="463.5" stroke="#ffffff"/>
<line x1="174.5" y1="476.5" x2="187.5" y2="476.5" stroke="#ffffff"/>
<circle cx="180.6" cy="433.5" r="4.5" stroke="#ffffff" fill="none" stroke-width="1.25" shape-rendering="geometricPrecision"/>
<circle cx="180.6" cy="433.5" r="2.5" stroke="#ffffff" fill="none" stroke-width="1.25" shape-rendering="geometricPrecision"/>
<circle cx="180.6" cy="469.5" r="4.5" stroke="#ffffff" fill="none" stroke-width="1.25" shape-rendering="geometricPrecision"/>
<circle cx="180.6" cy="469.5" r="2.5" stroke="#ffffff" fill="none" stroke-width="1.25" shape-rendering="geometricPrecision"/>
<line x1="187.5" y1="441.5" x2="226.5" y2="441.5" stroke="#ffffff"/>
<line x1="334.5" y1="441.5" x2="405.5" y2="441.5" stroke="#ffffff"/>
<line x1="187.5" y1="442.5" x2="226.5" y2="442.5" stroke="#ffffff"/>
<line x1="334.5" y1="442.5" x2="405.5" y2="442.5" stroke="#ffffff"/>
<line x1="187.5" y1="444.5" x2="226.5" y2="444.5" stroke="#ffffff"/>
<line x1="334.5" y1="444.5" x2="405.5" y2="444.5" stroke="#ffffff"/>
<line x1="187.5" y1="459.5" x2="226.5" y2="459.5" stroke="#ffffff"/>
<line x1="334.5" y1="459.5" x2="405.5" y2="459.5" stroke="#ffffff"/>
<line x1="187.5" y1="461.5" x2="226.5" y2="461.5" stroke="#ffffff"/>
<line x1="334.5" y1="461.5" x2="405.5" y2="461.5" stroke="#ffffff"/>
<circle cx="252.7" cy="426.5" r="4.8" stroke="#ffffff" fill="none" stroke-width="1.25" shape-rendering="geometricPrecision"/>
<circle cx="252.7" cy="426.5" r="2.4" stroke="#ffffff" fill="none" stroke-width="1.25" shape-rendering="geometricPrecision"/>
<circle cx="308.8" cy="426.5" r="4.8" stroke="#ffffff" fill="none" stroke-width="1.25" shape-rendering="geometricPrecision"/>
<circle cx="308.8" cy="426.5" r="2.4" stroke="#ffffff" fill="none" stroke-width="1.25" shape-rendering="geometricPrecision"/>
<circle cx="252.7" cy="476.5" r="4.8" stroke="#ffffff" fill="none" stroke-width="1.25" shape-rendering="geometricPrecision"/>
<circle cx="252.7" cy="476.5" r="2.4" stroke="#ffffff" fill="none" stroke-width="1.25" shape-rendering="geometricPrecision"/>
<circle cx="308.8" cy="476.5" r="4.8" stroke="#ffffff" fill="none" stroke-width="1.25" shape-rendering="geometricPrecision"/>
<circle cx="308.8" cy="476.5" r="2.4" stroke="#ffffff" fill="none" stroke-width="1.25" shape-rendering="geometricPrecision"/>
<line x1="334.5" y1="421.5" x2="436.5" y2="421.5" stroke="#ffffff"/>
<line x1="334.5" y1="481.5" x2="436.5" y2="481.5" stroke="#ffffff"/>
<line x1="411.5" y1="421.5" x2="411.5" y2="481.5" stroke="#ffffff"/>
<line x1="436.5" y1="421.5" x2="436.5" y2="481.5" stroke="#ffffff"/>
<rect x="405.5" y="435.5" width="31" height="33" stroke="#ffffff" fill="none"/>
<line x1="411.5" y1="435.5" x2="411.5" y2="468.5" stroke="#ffffff"/>
<path d="M407.5 438.5 L418.5 438.5 L418.5 440.5 L407.5 440.5" stroke="#ffffff" fill="none"/>
<path d="M407.5 463.5 L418.5 463.5 L418.5 465.5 L407.5 465.5" stroke="#ffffff" fill="none"/>
<circle cx="423.8" cy="429" r="4.5" stroke="#ffffff" fill="none" stroke-width="1.25" shape-rendering="geometricPrecision"/>
<circle cx="423.8" cy="429" r="2.5" stroke="#ffffff" fill="none" stroke-width="1.25" shape-rendering="geometricPrecision"/>
<circle cx="423.8" cy="474" r="4.5" stroke="#ffffff" fill="none" stroke-width="1.25" shape-rendering="geometricPrecision"/>
<circle cx="423.8" cy="474" r="2.5" stroke="#ffffff" fill="none" stroke-width="1.25" shape-rendering="geometricPrecision"/>
<path d="M436.5 433.5 L525.5 433.5 L525.5 469.5 L436.5 469.5" stroke="#ffffff" fill="none"/>
<rect x="437.5" y="443.5" width="19" height="16" stroke="#ffffff" fill="none"/>
<line x1="447.5" y1="443.5" x2="447.5" y2="459.5" stroke="#ffffff"/>
<line x1="456.5" y1="448.5" x2="463.5" y2="448.5" stroke="#ffffff"/>
<line x1="456.5" y1="455.5" x2="463.5" y2="455.5" stroke="#ffffff"/>
<rect x="453" y="444" width="3" height="3" fill="#fff" stroke="none"/>
<rect x="439" y="456" width="3" height="3" fill="#fff" stroke="none"/>
<line x1="463.5" y1="433.5" x2="463.5" y2="469.5" stroke="#ffffff"/>
<line x1="469.5" y1="433.5" x2="469.5" y2="469.5" stroke="#ffffff"/>
<line x1="473.5" y1="439.5" x2="525.5" y2="439.5" stroke="#ffffff"/>
<line x1="473.5" y1="463.5" x2="525.5" y2="463.5" stroke="#ffffff"/>
<rect x="473.5" y="433.5" width="3" height="7" stroke="#ffffff" fill="none"/>
<rect x="473.5" y="462.5" width="3" height="7" stroke="#ffffff" fill="none"/>
<rect x="461.5" y="435.5" width="2" height="3" stroke="#ffffff" fill="none"/>
<rect x="461.5" y="464.5" width="2" height="3" stroke="#ffffff" fill="none"/>
<line x1="181.5" y1="548.5" x2="205.5" y2="548.5" stroke="#ffffff"/>
<line x1="181.5" y1="548.5" x2="180.8" y2="473.5" stroke="#ffffff"/>
<rect x="179.8" y="472.5" width="2" height="2" fill="#fff" stroke="none"/>
<line x1="264.5" y1="548.5" x2="287.5" y2="548.5" stroke="#ffffff"/>
<line x1="264.5" y1="548.5" x2="252.7" y2="479" stroke="#ffffff"/>
<rect x="251.7" y="478" width="2" height="2" fill="#fff" stroke="none"/>
<line x1="338.5" y1="548.5" x2="361.5" y2="548.5" stroke="#ffffff"/>
<line x1="361.5" y1="548.5" x2="405.7" y2="468" stroke="#ffffff"/>
<rect x="404.7" y="467" width="2" height="2" fill="#fff" stroke="none"/>
<line x1="394.5" y1="548.5" x2="418.5" y2="548.5" stroke="#ffffff"/>
<line x1="418.5" y1="548.5" x2="425.1" y2="480.2" stroke="#ffffff"/>
<rect x="424.1" y="479.2" width="2" height="2" fill="#fff" stroke="none"/>
<line x1="465.5" y1="548.5" x2="489.5" y2="548.5" stroke="#ffffff"/>
<line x1="465.5" y1="548.5" x2="451.8" y2="451.7" stroke="#ffffff"/>
<rect x="450.8" y="450.7" width="2" height="2" fill="#fff" stroke="none"/>
<line x1="598.5" y1="328.5" x2="1030.5" y2="328.5" stroke="#00ff00"/>
<line x1="598.5" y1="345.5" x2="1030.5" y2="345.5" stroke="#00ff00"/>
<line x1="598.5" y1="362.5" x2="1030.5" y2="362.5" stroke="#00ff00"/>
<line x1="598.5" y1="378.5" x2="1030.5" y2="378.5" stroke="#00ff00"/>
<line x1="598.5" y1="395.5" x2="1030.5" y2="395.5" stroke="#00ff00"/>
<line x1="598.5" y1="412.5" x2="1030.5" y2="412.5" stroke="#00ff00"/>
<line x1="598.5" y1="429.5" x2="1030.5" y2="429.5" stroke="#00ff00"/>
<line x1="598.5" y1="445.5" x2="1030.5" y2="445.5" stroke="#00ff00"/>
<line x1="598.5" y1="462.5" x2="1030.5" y2="462.5" stroke="#00ff00"/>
<line x1="598.5" y1="479.5" x2="1030.5" y2="479.5" stroke="#00ff00"/>
<line x1="598.5" y1="496.5" x2="1030.5" y2="496.5" stroke="#00ff00"/>
<line x1="598.5" y1="513.5" x2="1030.5" y2="513.5" stroke="#00ff00"/>
<line x1="598.5" y1="529.5" x2="1030.5" y2="529.5" stroke="#00ff00"/>
<line x1="598.5" y1="546.5" x2="1030.5" y2="546.5" stroke="#00ff00"/>
<line x1="598.5" y1="563.5" x2="1030.5" y2="563.5" stroke="#00ff00"/>
<line x1="598.5" y1="580.5" x2="1030.5" y2="580.5" stroke="#00ff00"/>
<line x1="598.5" y1="613.5" x2="1030.5" y2="613.5" stroke="#00ff00"/>
<line x1="598.5" y1="328.5" x2="598.5" y2="613.5" stroke="#00ff00"/>
<line x1="618.5" y1="328.5" x2="618.5" y2="613.5" stroke="#00ff00"/>
<line x1="713.5" y1="328.5" x2="713.5" y2="613.5" stroke="#00ff00"/>
<line x1="819.5" y1="328.5" x2="819.5" y2="613.5" stroke="#00ff00"/>
<line x1="838.5" y1="328.5" x2="838.5" y2="613.5" stroke="#00ff00"/>
<line x1="929.5" y1="328.5" x2="929.5" y2="613.5" stroke="#00ff00"/>
<line x1="953.5" y1="328.5" x2="953.5" y2="613.5" stroke="#00ff00"/>
<line x1="982.5" y1="328.5" x2="982.5" y2="613.5" stroke="#00ff00"/>
<line x1="1030.5" y1="328.5" x2="1030.5" y2="613.5" stroke="#00ff00"/>
<line x1="953.5" y1="597" x2="953.5" y2="613" stroke="#000"/>
<line x1="929.5" y1="596.5" x2="982.5" y2="596.5" stroke="#00ff00"/>
<line x1="167.5" y1="613.5" x2="598.5" y2="613.5" stroke="#00ff00"/>
<line x1="167.5" y1="630.5" x2="598.5" y2="630.5" stroke="#00ff00"/>
<line x1="167.5" y1="647.5" x2="598.5" y2="647.5" stroke="#00ff00"/>
<line x1="167.5" y1="664.5" x2="598.5" y2="664.5" stroke="#00ff00"/>
<line x1="167.5" y1="680.5" x2="598.5" y2="680.5" stroke="#00ff00"/>
<line x1="167.5" y1="697.5" x2="598.5" y2="697.5" stroke="#00ff00"/>
<line x1="167.5" y1="714.5" x2="598.5" y2="714.5" stroke="#00ff00"/>
<line x1="167.5" y1="731.5" x2="598.5" y2="731.5" stroke="#00ff00"/>
<line x1="167.5" y1="748.5" x2="598.5" y2="748.5" stroke="#00ff00"/>
<line x1="167.5" y1="613.5" x2="167.5" y2="748.5" stroke="#00ff00"/>
<line x1="186.5" y1="613.5" x2="186.5" y2="748.5" stroke="#00ff00"/>
<line x1="282.5" y1="613.5" x2="282.5" y2="748.5" stroke="#00ff00"/>
<line x1="388.5" y1="613.5" x2="388.5" y2="748.5" stroke="#00ff00"/>
<line x1="407.5" y1="613.5" x2="407.5" y2="748.5" stroke="#00ff00"/>
<line x1="498.5" y1="613.5" x2="498.5" y2="748.5" stroke="#00ff00"/>
<line x1="522.5" y1="613.5" x2="522.5" y2="748.5" stroke="#00ff00"/>
<line x1="550.5" y1="613.5" x2="550.5" y2="748.5" stroke="#00ff00"/>
<line x1="598.5" y1="613.5" x2="598.5" y2="748.5" stroke="#00ff00"/>
<line x1="598.5" y1="630.5" x2="790.5" y2="630.5" stroke="#ffffff"/>
<line x1="598.5" y1="647.5" x2="790.5" y2="647.5" stroke="#ffffff"/>
<line x1="598.5" y1="664.5" x2="790.5" y2="664.5" stroke="#ffffff"/>
<line x1="598.5" y1="680.5" x2="790.5" y2="680.5" stroke="#ffffff"/>
<line x1="598.5" y1="697.5" x2="790.5" y2="697.5" stroke="#ffffff"/>
<line x1="598.5" y1="714.5" x2="790.5" y2="714.5" stroke="#ffffff"/>
<line x1="598.5" y1="731.5" x2="790.5" y2="731.5" stroke="#ffffff"/>
<line x1="622.5" y1="613.5" x2="622.5" y2="680.5" stroke="#ffffff"/>
<line x1="646.5" y1="613.5" x2="646.5" y2="680.5" stroke="#ffffff"/>
<line x1="685.5" y1="613.5" x2="685.5" y2="680.5" stroke="#ffffff"/>
<line x1="627.5" y1="680.5" x2="627.5" y2="748.5" stroke="#ffffff"/>
<line x1="656.5" y1="680.5" x2="656.5" y2="748.5" stroke="#ffffff"/>
<line x1="694.5" y1="680.5" x2="694.5" y2="748.5" stroke="#ffffff"/>
<line x1="723.5" y1="613.5" x2="723.5" y2="748.5" stroke="#ffffff"/>
<line x1="752.5" y1="613.5" x2="752.5" y2="748.5" stroke="#ffffff"/>
<line x1="790.5" y1="613.5" x2="790.5" y2="748.5" stroke="#ffffff"/>
<line x1="910.5" y1="613.5" x2="910.5" y2="748.5" stroke="#ffffff"/>
<line x1="790.5" y1="680.5" x2="910.5" y2="680.5" stroke="#ffffff"/>
<line x1="790.5" y1="704.5" x2="910.5" y2="704.5" stroke="#ffffff"/>
<line x1="790.5" y1="726.5" x2="1030.5" y2="726.5" stroke="#ffffff"/>
<line x1="852.5" y1="680.5" x2="852.5" y2="726.5" stroke="#ffffff"/>
<line x1="881.5" y1="680.5" x2="881.5" y2="726.5" stroke="#ffffff"/>
<line x1="806.5" y1="704.5" x2="806.5" y2="726.5" stroke="#ffffff"/>
<line x1="821.5" y1="704.5" x2="821.5" y2="726.5" stroke="#ffffff"/>
<line x1="837.5" y1="704.5" x2="837.5" y2="726.5" stroke="#ffffff"/>
<line x1="910.5" y1="654.5" x2="1030.5" y2="654.5" stroke="#ffffff"/>
<line x1="910.5" y1="697.5" x2="1030.5" y2="697.5" stroke="#ffffff"/>
<line x1="598.5" y1="613.5" x2="598.5" y2="748.5" stroke="#00ff00"/>
<line x1="598.5" y1="613.5" x2="1030.5" y2="613.5" stroke="#00ff00"/>
</g>
<g opacity="0.999">
<text transform="translate(150.5 155.2) scale(0.6 1)" font-family="&quot;Liberation Serif&quot;, &quot;Noto Serif CJK SC&quot;, serif" font-size="19" fill="#ffffff" text-anchor="middle" font-weight="bold">1</text>
<text transform="translate(194.3 155.2) scale(0.6 1)" font-family="&quot;Liberation Serif&quot;, &quot;Noto Serif CJK SC&quot;, serif" font-size="19" fill="#ffffff" text-anchor="middle" font-weight="bold">2</text>
<text transform="translate(234.3 155.2) scale(0.6 1)" font-family="&quot;Liberation Serif&quot;, &quot;Noto Serif CJK SC&quot;, serif" font-size="19" fill="#ffffff" text-anchor="middle" font-weight="bold">3</text>
<text transform="translate(276.3 155.2) scale(0.6 1)" font-family="&quot;Liberation Serif&quot;, &quot;Noto Serif CJK SC&quot;, serif" font-size="19" fill="#ffffff" text-anchor="middle" font-weight="bold">4</text>
<text transform="translate(312.5 155.2) scale(0.6 1)" font-family="&quot;Liberation Serif&quot;, &quot;Noto Serif CJK SC&quot;, serif" font-size="19" fill="#ffffff" text-anchor="middle" font-weight="bold">5</text>
<text transform="translate(349.5 155.2) scale(0.6 1)" font-family="&quot;Liberation Serif&quot;, &quot;Noto Serif CJK SC&quot;, serif" font-size="19" fill="#ffffff" text-anchor="middle" font-weight="bold">6</text>
<text transform="translate(394.5 155.2) scale(0.6 1)" font-family="&quot;Liberation Serif&quot;, &quot;Noto Serif CJK SC&quot;, serif" font-size="19" fill="#ffffff" text-anchor="middle" font-weight="bold">7</text>
<text transform="translate(455 155.2) scale(0.6 1)" font-family="&quot;Liberation Serif&quot;, &quot;Noto Serif CJK SC&quot;, serif" font-size="19" fill="#ffffff" text-anchor="middle" font-weight="bold">8</text>
<text transform="translate(507.5 155.2) scale(0.6 1)" font-family="&quot;Liberation Serif&quot;, &quot;Noto Serif CJK SC&quot;, serif" font-size="19" fill="#ffffff" text-anchor="middle" font-weight="bold">9</text>
<text transform="translate(550 155.2) scale(0.6 1)" font-family="&quot;Liberation Serif&quot;, &quot;Noto Serif CJK SC&quot;, serif" font-size="19" fill="#ffffff" text-anchor="middle" font-weight="bold">10</text>
<text transform="translate(200 294) scale(0.6 1)" font-family="&quot;Liberation Serif&quot;, &quot;Noto Serif CJK SC&quot;, serif" font-size="19" fill="#ffffff" text-anchor="middle" font-weight="bold">11</text>
<text transform="translate(240 294) scale(0.6 1)" font-family="&quot;Liberation Serif&quot;, &quot;Noto Serif CJK SC&quot;, serif" font-size="19" fill="#ffffff" text-anchor="middle" font-weight="bold">12</text>
<text transform="translate(287.5 294) scale(0.6 1)" font-family="&quot;Liberation Serif&quot;, &quot;Noto Serif CJK SC&quot;, serif" font-size="19" fill="#ffffff" text-anchor="middle" font-weight="bold">13</text>
<text transform="translate(342 294) scale(0.6 1)" font-family="&quot;Liberation Serif&quot;, &quot;Noto Serif CJK SC&quot;, serif" font-size="19" fill="#ffffff" text-anchor="middle" font-weight="bold">15</text>
<text transform="translate(461 294) scale(0.6 1)" font-family="&quot;Liberation Serif&quot;, &quot;Noto Serif CJK SC&quot;, serif" font-size="19" fill="#ffffff" text-anchor="middle" font-weight="bold">17</text>
<text transform="translate(512 294) scale(0.6 1)" font-family="&quot;Liberation Serif&quot;, &quot;Noto Serif CJK SC&quot;, serif" font-size="19" fill="#ffffff" text-anchor="middle" font-weight="bold">18</text>
<text transform="translate(709.5 159.8) scale(0.6 1)" font-family="&quot;Liberation Serif&quot;, &quot;Noto Serif CJK SC&quot;, serif" font-size="19" fill="#ffffff" text-anchor="middle" font-weight="bold">19</text>
<text transform="translate(818.5 193.8) scale(0.6 1)" font-family="&quot;Liberation Serif&quot;, &quot;Noto Serif CJK SC&quot;, serif" font-size="19" fill="#ffffff" text-anchor="middle" font-weight="bold">16</text>
<text transform="translate(194.5 545) scale(0.6 1)" font-family="&quot;Liberation Serif&quot;, &quot;Noto Serif CJK SC&quot;, serif" font-size="19" fill="#ffffff" text-anchor="middle" font-weight="bold">20</text>
<text transform="translate(276.5 545) scale(0.6 1)" font-family="&quot;Liberation Serif&quot;, &quot;Noto Serif CJK SC&quot;, serif" font-size="19" fill="#ffffff" text-anchor="middle" font-weight="bold">21</text>
<text transform="translate(349.5 545) scale(0.6 1)" font-family="&quot;Liberation Serif&quot;, &quot;Noto Serif CJK SC&quot;, serif" font-size="19" fill="#ffffff" text-anchor="middle" font-weight="bold">22</text>
<text transform="translate(406 545) scale(0.6 1)" font-family="&quot;Liberation Serif&quot;, &quot;Noto Serif CJK SC&quot;, serif" font-size="19" fill="#ffffff" text-anchor="middle" font-weight="bold">23</text>
<text transform="translate(477.7 545) scale(0.6 1)" font-family="&quot;Liberation Serif&quot;, &quot;Noto Serif CJK SC&quot;, serif" font-size="19" fill="#ffffff" text-anchor="middle" font-weight="bold">14</text>
<text transform="translate(155.6 66) rotate(180) scale(0.58 1)" font-family="&quot;Liberation Serif&quot;, &quot;Noto Serif CJK SC&quot;, serif" font-size="17.6" fill="#00ff00" text-anchor="middle" stroke="#00ff00" stroke-width="0.4">SN<tspan textLength="8.6" lengthAdjust="spacingAndGlyphs">-</tspan>HT<tspan textLength="17.2" lengthAdjust="spacingAndGlyphs">-</tspan>00</text>
<text transform="translate(313 175.8) scale(0.55 1)" font-family="&quot;Liberation Serif&quot;, &quot;Noto Serif CJK SC&quot;, serif" font-size="12.5" fill="#00ff00" text-anchor="middle" font-weight="bold" stroke="#00ff00" stroke-width="0.5">A</text>
<text transform="translate(309 286.5) scale(0.55 1)" font-family="&quot;Liberation Serif&quot;, &quot;Noto Serif CJK SC&quot;, serif" font-size="12.5" fill="#00ff00" text-anchor="middle" font-weight="bold" stroke="#00ff00" stroke-width="0.5">A</text>
<text transform="translate(329.5 199) scale(0.6 1)" font-family="&quot;Liberation Serif&quot;, &quot;Noto Serif CJK SC&quot;, serif" font-size="12.5" fill="#00ff00" text-anchor="middle" font-weight="bold">B</text>
<text transform="translate(329.5 231) scale(0.6 1)" font-family="&quot;Liberation Serif&quot;, &quot;Noto Serif CJK SC&quot;, serif" font-size="12.5" fill="#00ff00" text-anchor="middle" font-weight="bold">B</text>
<text transform="translate(702 136) scale(0.55 1)" font-family="&quot;Liberation Serif&quot;, &quot;Noto Serif CJK SC&quot;, serif" font-size="12.5" fill="#00ff00" text-anchor="middle" font-weight="bold" stroke="#00ff00" stroke-width="0.5">A-A</text>
<text transform="translate(852.7 183) scale(0.6 1)" font-family="&quot;Liberation Serif&quot;, &quot;Noto Serif CJK SC&quot;, serif" font-size="12.5" fill="#00ff00" text-anchor="middle" font-weight="bold" stroke="#00ff00" stroke-width="0.3">B-B</text>
<text transform="translate(122 223.7) rotate(-90) scale(0.43 1)" font-family="&quot;Liberation Sans&quot;, &quot;Noto Sans CJK SC&quot;, sans-serif" font-size="12.5" fill="#00ff00" text-anchor="middle" font-weight="bold" stroke="#00ff00" stroke-width="0.35">167</text>
<text transform="translate(143.3 218.5) rotate(-90) scale(0.52 1)" font-family="&quot;Liberation Sans&quot;, &quot;Noto Sans CJK SC&quot;, sans-serif" font-size="11" fill="#00ff00" text-anchor="start" font-weight="bold" stroke="#00ff00" stroke-width="0.35">Ø37</text>
<text transform="translate(138.8 207.05) rotate(-90) scale(0.75 1)" font-family="&quot;Liberation Sans&quot;, &quot;Noto Sans CJK SC&quot;, sans-serif" font-size="6.5" fill="#00ff00" text-anchor="start" font-weight="bold" stroke="#00ff00" stroke-width="0.35">H7</text>
<text transform="translate(145.8 207.05) rotate(-90) scale(0.75 1)" font-family="&quot;Liberation Sans&quot;, &quot;Noto Sans CJK SC&quot;, sans-serif" font-size="6.5" fill="#00ff00" text-anchor="start" font-weight="bold" stroke="#00ff00" stroke-width="0.35">h6</text>
<rect x="139.1" y="200.05" width="1" height="7" fill="#00ff00"/>
<text transform="translate(160 250.5) rotate(-90) scale(0.52 1)" font-family="&quot;Liberation Sans&quot;, &quot;Noto Sans CJK SC&quot;, sans-serif" font-size="11" fill="#00ff00" text-anchor="start" font-weight="bold" stroke="#00ff00" stroke-width="0.35">Ø24</text>
<text transform="translate(155.5 239.05) rotate(-90) scale(0.75 1)" font-family="&quot;Liberation Sans&quot;, &quot;Noto Sans CJK SC&quot;, sans-serif" font-size="6.5" fill="#00ff00" text-anchor="start" font-weight="bold" stroke="#00ff00" stroke-width="0.35">H7</text>
<text transform="translate(162.5 239.05) rotate(-90) scale(0.75 1)" font-family="&quot;Liberation Sans&quot;, &quot;Noto Sans CJK SC&quot;, sans-serif" font-size="6.5" fill="#00ff00" text-anchor="start" font-weight="bold" stroke="#00ff00" stroke-width="0.35">k6</text>
<rect x="155.8" y="232.05" width="1" height="7" fill="#00ff00"/>
<text transform="translate(384.8 199) rotate(-90) scale(0.52 1)" font-family="&quot;Liberation Sans&quot;, &quot;Noto Sans CJK SC&quot;, sans-serif" font-size="11" fill="#00ff00" text-anchor="start" font-weight="bold" stroke="#00ff00" stroke-width="0.35">Ø20</text>
<text transform="translate(380.3 187.55) rotate(-90) scale(0.75 1)" font-family="&quot;Liberation Sans&quot;, &quot;Noto Sans CJK SC&quot;, sans-serif" font-size="6.5" fill="#00ff00" text-anchor="start" font-weight="bold" stroke="#00ff00" stroke-width="0.35">H7</text>
<text transform="translate(387.3 187.55) rotate(-90) scale(0.75 1)" font-family="&quot;Liberation Sans&quot;, &quot;Noto Sans CJK SC&quot;, sans-serif" font-size="6.5" fill="#00ff00" text-anchor="start" font-weight="bold" stroke="#00ff00" stroke-width="0.35">k6</text>
<rect x="380.6" y="180.55" width="1" height="7" fill="#00ff00"/>
<text transform="translate(451.5 192) rotate(-90) scale(0.52 1)" font-family="&quot;Liberation Sans&quot;, &quot;Noto Sans CJK SC&quot;, sans-serif" font-size="11" fill="#00ff00" text-anchor="start" font-weight="bold" stroke="#00ff00" stroke-width="0.35">Ø42</text>
<text transform="translate(447 180.55) rotate(-90) scale(0.75 1)" font-family="&quot;Liberation Sans&quot;, &quot;Noto Sans CJK SC&quot;, sans-serif" font-size="6.5" fill="#00ff00" text-anchor="start" font-weight="bold" stroke="#00ff00" stroke-width="0.35">H7</text>
<text transform="translate(454 180.55) rotate(-90) scale(0.75 1)" font-family="&quot;Liberation Sans&quot;, &quot;Noto Sans CJK SC&quot;, sans-serif" font-size="6.5" fill="#00ff00" text-anchor="start" font-weight="bold" stroke="#00ff00" stroke-width="0.35">h6</text>
<rect x="447.3" y="173.55" width="1" height="7" fill="#00ff00"/>
<text transform="translate(338.5 329) scale(0.5 1)" font-family="&quot;Liberation Sans&quot;, &quot;Noto Sans CJK SC&quot;, sans-serif" font-size="11.5" fill="#00ff00" text-anchor="middle" font-weight="bold" stroke="#00ff00" stroke-width="0.35">544</text>
<text transform="translate(145 452) rotate(-90) scale(0.43 1)" font-family="&quot;Liberation Sans&quot;, &quot;Noto Sans CJK SC&quot;, sans-serif" font-size="12.5" fill="#00ff00" text-anchor="middle" font-weight="bold" stroke="#00ff00" stroke-width="0.35">110</text>
<text transform="translate(602 341.2) scale(0.41 1)" font-family="&quot;Liberation Sans&quot;, &quot;Noto Sans CJK SC&quot;, sans-serif" font-size="13" fill="#00ff00" text-anchor="start" font-weight="bold" stroke="#00ff00" stroke-width="0.35">15</text>
<text transform="translate(622 341.2) scale(0.46 1)" font-family="&quot;Liberation Sans&quot;, &quot;Noto Sans CJK SC&quot;, sans-serif" font-size="13" fill="#00ff00" text-anchor="start" font-weight="bold" stroke="#00ff00" stroke-width="0.35">M6x30 GB/T 70.1-2000</text>
<text transform="translate(717.5 341.1) scale(0.46 1)" font-family="&quot;Liberation Sans&quot;, &quot;Noto Sans CJK SC&quot;, sans-serif" font-size="12.6" fill="#00ff00" text-anchor="start" font-weight="bold" stroke="#00ff00" stroke-width="0.35">内六角圆柱头螺钉</text>
<text transform="translate(822.5 341.2) scale(0.41 1)" font-family="&quot;Liberation Sans&quot;, &quot;Noto Sans CJK SC&quot;, sans-serif" font-size="13" fill="#00ff00" text-anchor="start" font-weight="bold" stroke="#00ff00" stroke-width="0.35">5</text>
<text transform="translate(841.5 341.2) scale(0.41 1)" font-family="&quot;Liberation Sans&quot;, &quot;Noto Sans CJK SC&quot;, sans-serif" font-size="13" fill="#00ff00" text-anchor="start" font-weight="bold" stroke="#00ff00" stroke-width="0.35">8.8</text>
<text transform="translate(849.8 341.1) scale(0.46 1)" font-family="&quot;Liberation Sans&quot;, &quot;Noto Sans CJK SC&quot;, sans-serif" font-size="12.6" fill="#00ff00" text-anchor="start" font-weight="bold" stroke="#00ff00" stroke-width="0.35">级</text>
<text transform="translate(602 358.2) scale(0.41 1)" font-family="&quot;Liberation Sans&quot;, &quot;Noto Sans CJK SC&quot;, sans-serif" font-size="13" fill="#00ff00" text-anchor="start" font-weight="bold" stroke="#00ff00" stroke-width="0.35">14</text>
<text transform="translate(622 358.2) scale(0.46 1)" font-family="&quot;Liberation Sans&quot;, &quot;Noto Sans CJK SC&quot;, sans-serif" font-size="13" fill="#00ff00" text-anchor="start" font-weight="bold" stroke="#00ff00" stroke-width="0.35">XHT2-2TC</text>
<text transform="translate(717.5 358.1) scale(0.46 1)" font-family="&quot;Liberation Sans&quot;, &quot;Noto Sans CJK SC&quot;, sans-serif" font-size="12.6" fill="#00ff00" text-anchor="start" font-weight="bold" stroke="#00ff00" stroke-width="0.35">联轴器</text>
<text transform="translate(822.5 358.2) scale(0.41 1)" font-family="&quot;Liberation Sans&quot;, &quot;Noto Sans CJK SC&quot;, sans-serif" font-size="13" fill="#00ff00" text-anchor="start" font-weight="bold" stroke="#00ff00" stroke-width="0.35">1</text>
<text transform="translate(602 374.2) scale(0.41 1)" font-family="&quot;Liberation Sans&quot;, &quot;Noto Sans CJK SC&quot;, sans-serif" font-size="13" fill="#00ff00" text-anchor="start" font-weight="bold" stroke="#00ff00" stroke-width="0.35">13</text>
<text transform="translate(622 374.2) scale(0.46 1)" font-family="&quot;Liberation Sans&quot;, &quot;Noto Sans CJK SC&quot;, sans-serif" font-size="13" fill="#00ff00" text-anchor="start" font-weight="bold" stroke="#00ff00" stroke-width="0.35">SN-HT-11</text>
<text transform="translate(717.5 374.1) scale(0.46 1)" font-family="&quot;Liberation Sans&quot;, &quot;Noto Sans CJK SC&quot;, sans-serif" font-size="12.6" fill="#00ff00" text-anchor="start" font-weight="bold" stroke="#00ff00" stroke-width="0.35">安装座</text>
<text transform="translate(822.5 374.2) scale(0.41 1)" font-family="&quot;Liberation Sans&quot;, &quot;Noto Sans CJK SC&quot;, sans-serif" font-size="13" fill="#00ff00" text-anchor="start" font-weight="bold" stroke="#00ff00" stroke-width="0.35">1</text>
<text transform="translate(841.5 374.2) scale(0.41 1)" font-family="&quot;Liberation Sans&quot;, &quot;Noto Sans CJK SC&quot;, sans-serif" font-size="13" fill="#00ff00" text-anchor="start" font-weight="bold" stroke="#00ff00" stroke-width="0.35">45</text>
<text transform="translate(847.7 374.1) scale(0.46 1)" font-family="&quot;Liberation Sans&quot;, &quot;Noto Sans CJK SC&quot;, sans-serif" font-size="12.6" fill="#00ff00" text-anchor="start" font-weight="bold" stroke="#00ff00" stroke-width="0.35">钢</text>
<text transform="translate(602 391.2) scale(0.41 1)" font-family="&quot;Liberation Sans&quot;, &quot;Noto Sans CJK SC&quot;, sans-serif" font-size="13" fill="#00ff00" text-anchor="start" font-weight="bold" stroke="#00ff00" stroke-width="0.35">12</text>
<text transform="translate(622 391.2) scale(0.46 1)" font-family="&quot;Liberation Sans&quot;, &quot;Noto Sans CJK SC&quot;, sans-serif" font-size="13" fill="#00ff00" text-anchor="start" font-weight="bold" stroke="#00ff00" stroke-width="0.35">HGH25CB</text>
<text transform="translate(717.5 391.1) scale(0.46 1)" font-family="&quot;Liberation Sans&quot;, &quot;Noto Sans CJK SC&quot;, sans-serif" font-size="12.6" fill="#00ff00" text-anchor="start" font-weight="bold" stroke="#00ff00" stroke-width="0.35">直线导轨</text>
<text transform="translate(822.5 391.2) scale(0.41 1)" font-family="&quot;Liberation Sans&quot;, &quot;Noto Sans CJK SC&quot;, sans-serif" font-size="13" fill="#00ff00" text-anchor="start" font-weight="bold" stroke="#00ff00" stroke-width="0.35">1</text>
<text transform="translate(602 408.2) scale(0.41 1)" font-family="&quot;Liberation Sans&quot;, &quot;Noto Sans CJK SC&quot;, sans-serif" font-size="13" fill="#00ff00" text-anchor="start" font-weight="bold" stroke="#00ff00" stroke-width="0.35">11</text>
<text transform="translate(622 408.2) scale(0.46 1)" font-family="&quot;Liberation Sans&quot;, &quot;Noto Sans CJK SC&quot;, sans-serif" font-size="13" fill="#00ff00" text-anchor="start" font-weight="bold" stroke="#00ff00" stroke-width="0.35">DST GB/T893.1-1986</text>
<text transform="translate(717.5 408.1) scale(0.46 1)" font-family="&quot;Liberation Sans&quot;, &quot;Noto Sans CJK SC&quot;, sans-serif" font-size="12.6" fill="#00ff00" text-anchor="start" font-weight="bold" stroke="#00ff00" stroke-width="0.35">孔用弹性挡圈</text>
<text transform="translate(822.5 408.2) scale(0.41 1)" font-family="&quot;Liberation Sans&quot;, &quot;Noto Sans CJK SC&quot;, sans-serif" font-size="13" fill="#00ff00" text-anchor="start" font-weight="bold" stroke="#00ff00" stroke-width="0.35">1</text>
<text transform="translate(602 425.2) scale(0.41 1)" font-family="&quot;Liberation Sans&quot;, &quot;Noto Sans CJK SC&quot;, sans-serif" font-size="13" fill="#00ff00" text-anchor="start" font-weight="bold" stroke="#00ff00" stroke-width="0.35">10</text>
<text transform="translate(622 425.2) scale(0.46 1)" font-family="&quot;Liberation Sans&quot;, &quot;Noto Sans CJK SC&quot;, sans-serif" font-size="13" fill="#00ff00" text-anchor="start" font-weight="bold" stroke="#00ff00" stroke-width="0.35">86BYJ-H0ATCS</text>
<text transform="translate(717.5 425.1) scale(0.46 1)" font-family="&quot;Liberation Sans&quot;, &quot;Noto Sans CJK SC&quot;, sans-serif" font-size="12.6" fill="#00ff00" text-anchor="start" font-weight="bold" stroke="#00ff00" stroke-width="0.35">伺服电机</text>
<text transform="translate(822.5 425.2) scale(0.41 1)" font-family="&quot;Liberation Sans&quot;, &quot;Noto Sans CJK SC&quot;, sans-serif" font-size="13" fill="#00ff00" text-anchor="start" font-weight="bold" stroke="#00ff00" stroke-width="0.35">1</text>
<text transform="translate(602 441.2) scale(0.41 1)" font-family="&quot;Liberation Sans&quot;, &quot;Noto Sans CJK SC&quot;, sans-serif" font-size="13" fill="#00ff00" text-anchor="start" font-weight="bold" stroke="#00ff00" stroke-width="0.35">9</text>
<text transform="translate(622 441.2) scale(0.46 1)" font-family="&quot;Liberation Sans&quot;, &quot;Noto Sans CJK SC&quot;, sans-serif" font-size="13" fill="#00ff00" text-anchor="start" font-weight="bold" stroke="#00ff00" stroke-width="0.35">SN-HT-13</text>
<text transform="translate(717.5 441.1) scale(0.46 1)" font-family="&quot;Liberation Sans&quot;, &quot;Noto Sans CJK SC&quot;, sans-serif" font-size="12.6" fill="#00ff00" text-anchor="start" font-weight="bold" stroke="#00ff00" stroke-width="0.35">电机座</text>
<text transform="translate(822.5 441.2) scale(0.41 1)" font-family="&quot;Liberation Sans&quot;, &quot;Noto Sans CJK SC&quot;, sans-serif" font-size="13" fill="#00ff00" text-anchor="start" font-weight="bold" stroke="#00ff00" stroke-width="0.35">1</text>
<text transform="translate(841.5 441.2) scale(0.41 1)" font-family="&quot;Liberation Sans&quot;, &quot;Noto Sans CJK SC&quot;, sans-serif" font-size="13" fill="#00ff00" text-anchor="start" font-weight="bold" stroke="#00ff00" stroke-width="0.35">45</text>
<text transform="translate(847.7 441.1) scale(0.46 1)" font-family="&quot;Liberation Sans&quot;, &quot;Noto Sans CJK SC&quot;, sans-serif" font-size="12.6" fill="#00ff00" text-anchor="start" font-weight="bold" stroke="#00ff00" stroke-width="0.35">钢</text>
<text transform="translate(602 458.2) scale(0.41 1)" font-family="&quot;Liberation Sans&quot;, &quot;Noto Sans CJK SC&quot;, sans-serif" font-size="13" fill="#00ff00" text-anchor="start" font-weight="bold" stroke="#00ff00" stroke-width="0.35">8</text>
<text transform="translate(622 458.2) scale(0.46 1)" font-family="&quot;Liberation Sans&quot;, &quot;Noto Sans CJK SC&quot;, sans-serif" font-size="13" fill="#00ff00" text-anchor="start" font-weight="bold" stroke="#00ff00" stroke-width="0.35">SN-HT-15</text>
<text transform="translate(717.5 458.1) scale(0.46 1)" font-family="&quot;Liberation Sans&quot;, &quot;Noto Sans CJK SC&quot;, sans-serif" font-size="12.6" fill="#00ff00" text-anchor="start" font-weight="bold" stroke="#00ff00" stroke-width="0.35">轴承盖</text>
<text transform="translate(822.5 458.2) scale(0.41 1)" font-family="&quot;Liberation Sans&quot;, &quot;Noto Sans CJK SC&quot;, sans-serif" font-size="13" fill="#00ff00" text-anchor="start" font-weight="bold" stroke="#00ff00" stroke-width="0.35">1</text>
<text transform="translate(602 475.2) scale(0.41 1)" font-family="&quot;Liberation Sans&quot;, &quot;Noto Sans CJK SC&quot;, sans-serif" font-size="13" fill="#00ff00" text-anchor="start" font-weight="bold" stroke="#00ff00" stroke-width="0.35">7</text>
<text transform="translate(622 475.2) scale(0.46 1)" font-family="&quot;Liberation Sans&quot;, &quot;Noto Sans CJK SC&quot;, sans-serif" font-size="13" fill="#00ff00" text-anchor="start" font-weight="bold" stroke="#00ff00" stroke-width="0.35">7004AC</text>
<text transform="translate(717.5 475.1) scale(0.46 1)" font-family="&quot;Liberation Sans&quot;, &quot;Noto Sans CJK SC&quot;, sans-serif" font-size="12.6" fill="#00ff00" text-anchor="start" font-weight="bold" stroke="#00ff00" stroke-width="0.35">角接触轴承</text>
<text transform="translate(822.5 475.2) scale(0.41 1)" font-family="&quot;Liberation Sans&quot;, &quot;Noto Sans CJK SC&quot;, sans-serif" font-size="13" fill="#00ff00" text-anchor="start" font-weight="bold" stroke="#00ff00" stroke-width="0.35">2</text>
<text transform="translate(602 492.2) scale(0.41 1)" font-family="&quot;Liberation Sans&quot;, &quot;Noto Sans CJK SC&quot;, sans-serif" font-size="13" fill="#00ff00" text-anchor="start" font-weight="bold" stroke="#00ff00" stroke-width="0.35">6</text>
<text transform="translate(622 492.2) scale(0.46 1)" font-family="&quot;Liberation Sans&quot;, &quot;Noto Sans CJK SC&quot;, sans-serif" font-size="13" fill="#00ff00" text-anchor="start" font-weight="bold" stroke="#00ff00" stroke-width="0.35">SN-HT-17</text>
<text transform="translate(717.5 492.1) scale(0.46 1)" font-family="&quot;Liberation Sans&quot;, &quot;Noto Sans CJK SC&quot;, sans-serif" font-size="12.6" fill="#00ff00" text-anchor="start" font-weight="bold" stroke="#00ff00" stroke-width="0.35">轴承压盖</text>
<text transform="translate(822.5 492.2) scale(0.41 1)" font-family="&quot;Liberation Sans&quot;, &quot;Noto Sans CJK SC&quot;, sans-serif" font-size="13" fill="#00ff00" text-anchor="start" font-weight="bold" stroke="#00ff00" stroke-width="0.35">1</text>
<text transform="translate(841.5 492.2) scale(0.41 1)" font-family="&quot;Liberation Sans&quot;, &quot;Noto Sans CJK SC&quot;, sans-serif" font-size="13" fill="#00ff00" text-anchor="start" font-weight="bold" stroke="#00ff00" stroke-width="0.35">45</text>
<text transform="translate(847.7 492.1) scale(0.46 1)" font-family="&quot;Liberation Sans&quot;, &quot;Noto Sans CJK SC&quot;, sans-serif" font-size="12.6" fill="#00ff00" text-anchor="start" font-weight="bold" stroke="#00ff00" stroke-width="0.35">钢</text>
<text transform="translate(602 509.2) scale(0.41 1)" font-family="&quot;Liberation Sans&quot;, &quot;Noto Sans CJK SC&quot;, sans-serif" font-size="13" fill="#00ff00" text-anchor="start" font-weight="bold" stroke="#00ff00" stroke-width="0.35">5</text>
<text transform="translate(622 509.2) scale(0.46 1)" font-family="&quot;Liberation Sans&quot;, &quot;Noto Sans CJK SC&quot;, sans-serif" font-size="13" fill="#00ff00" text-anchor="start" font-weight="bold" stroke="#00ff00" stroke-width="0.35">SN-HT-12</text>
<text transform="translate(717.5 509.1) scale(0.46 1)" font-family="&quot;Liberation Sans&quot;, &quot;Noto Sans CJK SC&quot;, sans-serif" font-size="12.6" fill="#00ff00" text-anchor="start" font-weight="bold" stroke="#00ff00" stroke-width="0.35">螺母座</text>
<text transform="translate(822.5 509.2) scale(0.41 1)" font-family="&quot;Liberation Sans&quot;, &quot;Noto Sans CJK SC&quot;, sans-serif" font-size="13" fill="#00ff00" text-anchor="start" font-weight="bold" stroke="#00ff00" stroke-width="0.35">1</text>
<text transform="translate(841.5 509.2) scale(0.41 1)" font-family="&quot;Liberation Sans&quot;, &quot;Noto Sans CJK SC&quot;, sans-serif" font-size="13" fill="#00ff00" text-anchor="start" font-weight="bold" stroke="#00ff00" stroke-width="0.35">45</text>
<text transform="translate(847.7 509.1) scale(0.46 1)" font-family="&quot;Liberation Sans&quot;, &quot;Noto Sans CJK SC&quot;, sans-serif" font-size="12.6" fill="#00ff00" text-anchor="start" font-weight="bold" stroke="#00ff00" stroke-width="0.35">钢</text>
<text transform="translate(602 525.2) scale(0.41 1)" font-family="&quot;Liberation Sans&quot;, &quot;Noto Sans CJK SC&quot;, sans-serif" font-size="13" fill="#00ff00" text-anchor="start" font-weight="bold" stroke="#00ff00" stroke-width="0.35">4</text>
<text transform="translate(622 525.2) scale(0.46 1)" font-family="&quot;Liberation Sans&quot;, &quot;Noto Sans CJK SC&quot;, sans-serif" font-size="13" fill="#00ff00" text-anchor="start" font-weight="bold" stroke="#00ff00" stroke-width="0.35">SN-HT-14</text>
<text transform="translate(717.5 525.1) scale(0.46 1)" font-family="&quot;Liberation Sans&quot;, &quot;Noto Sans CJK SC&quot;, sans-serif" font-size="12.6" fill="#00ff00" text-anchor="start" font-weight="bold" stroke="#00ff00" stroke-width="0.35">工作台</text>
<text transform="translate(822.5 525.2) scale(0.41 1)" font-family="&quot;Liberation Sans&quot;, &quot;Noto Sans CJK SC&quot;, sans-serif" font-size="13" fill="#00ff00" text-anchor="start" font-weight="bold" stroke="#00ff00" stroke-width="0.35">1</text>
<text transform="translate(841.5 525.2) scale(0.41 1)" font-family="&quot;Liberation Sans&quot;, &quot;Noto Sans CJK SC&quot;, sans-serif" font-size="13" fill="#00ff00" text-anchor="start" font-weight="bold" stroke="#00ff00" stroke-width="0.35">6063</text>
<text transform="translate(602 542.2) scale(0.41 1)" font-family="&quot;Liberation Sans&quot;, &quot;Noto Sans CJK SC&quot;, sans-serif" font-size="13" fill="#00ff00" text-anchor="start" font-weight="bold" stroke="#00ff00" stroke-width="0.35">3</text>
<text transform="translate(622 542.2) scale(0.46 1)" font-family="&quot;Liberation Sans&quot;, &quot;Noto Sans CJK SC&quot;, sans-serif" font-size="13" fill="#00ff00" text-anchor="start" font-weight="bold" stroke="#00ff00" stroke-width="0.35">FSI25-10C3</text>
<text transform="translate(717.5 542.1) scale(0.46 1)" font-family="&quot;Liberation Sans&quot;, &quot;Noto Sans CJK SC&quot;, sans-serif" font-size="12.6" fill="#00ff00" text-anchor="start" font-weight="bold" stroke="#00ff00" stroke-width="0.35">滚珠丝杠</text>
<text transform="translate(822.5 542.2) scale(0.41 1)" font-family="&quot;Liberation Sans&quot;, &quot;Noto Sans CJK SC&quot;, sans-serif" font-size="13" fill="#00ff00" text-anchor="start" font-weight="bold" stroke="#00ff00" stroke-width="0.35">1</text>
<text transform="translate(602 559.2) scale(0.41 1)" font-family="&quot;Liberation Sans&quot;, &quot;Noto Sans CJK SC&quot;, sans-serif" font-size="13" fill="#00ff00" text-anchor="start" font-weight="bold" stroke="#00ff00" stroke-width="0.35">2</text>
<text transform="translate(622 559.2) scale(0.46 1)" font-family="&quot;Liberation Sans&quot;, &quot;Noto Sans CJK SC&quot;, sans-serif" font-size="13" fill="#00ff00" text-anchor="start" font-weight="bold" stroke="#00ff00" stroke-width="0.35">61904</text>
<text transform="translate(717.5 559.1) scale(0.46 1)" font-family="&quot;Liberation Sans&quot;, &quot;Noto Sans CJK SC&quot;, sans-serif" font-size="12.6" fill="#00ff00" text-anchor="start" font-weight="bold" stroke="#00ff00" stroke-width="0.35">深沟球轴承</text>
<text transform="translate(822.5 559.2) scale(0.41 1)" font-family="&quot;Liberation Sans&quot;, &quot;Noto Sans CJK SC&quot;, sans-serif" font-size="13" fill="#00ff00" text-anchor="start" font-weight="bold" stroke="#00ff00" stroke-width="0.35">1</text>
<text transform="translate(602 576.2) scale(0.41 1)" font-family="&quot;Liberation Sans&quot;, &quot;Noto Sans CJK SC&quot;, sans-serif" font-size="13" fill="#00ff00" text-anchor="start" font-weight="bold" stroke="#00ff00" stroke-width="0.35">1</text>
<text transform="translate(622 576.2) scale(0.46 1)" font-family="&quot;Liberation Sans&quot;, &quot;Noto Sans CJK SC&quot;, sans-serif" font-size="13" fill="#00ff00" text-anchor="start" font-weight="bold" stroke="#00ff00" stroke-width="0.35">SN-HT-11</text>
<text transform="translate(717.5 576.1) scale(0.46 1)" font-family="&quot;Liberation Sans&quot;, &quot;Noto Sans CJK SC&quot;, sans-serif" font-size="12.6" fill="#00ff00" text-anchor="start" font-weight="bold" stroke="#00ff00" stroke-width="0.35">轴承座</text>
<text transform="translate(822.5 576.2) scale(0.41 1)" font-family="&quot;Liberation Sans&quot;, &quot;Noto Sans CJK SC&quot;, sans-serif" font-size="13" fill="#00ff00" text-anchor="start" font-weight="bold" stroke="#00ff00" stroke-width="0.35">1</text>
<text transform="translate(841.5 576.2) scale(0.41 1)" font-family="&quot;Liberation Sans&quot;, &quot;Noto Sans CJK SC&quot;, sans-serif" font-size="13" fill="#00ff00" text-anchor="start" font-weight="bold" stroke="#00ff00" stroke-width="0.35">45</text>
<text transform="translate(847.7 576.1) scale(0.46 1)" font-family="&quot;Liberation Sans&quot;, &quot;Noto Sans CJK SC&quot;, sans-serif" font-size="12.6" fill="#00ff00" text-anchor="start" font-weight="bold" stroke="#00ff00" stroke-width="0.35">钢</text>
<text transform="translate(608.5 603.62) scale(0.42 1)" font-family="&quot;Liberation Sans&quot;, &quot;Noto Sans CJK SC&quot;, sans-serif" font-size="17" fill="#00ff00" text-anchor="middle" font-weight="bold" stroke="#00ff00" stroke-width="0.35">序号</text>
<text transform="translate(666 603.62) scale(0.42 1)" font-family="&quot;Liberation Sans&quot;, &quot;Noto Sans CJK SC&quot;, sans-serif" font-size="17" fill="#00ff00" text-anchor="middle" font-weight="bold" stroke="#00ff00" stroke-width="0.35">代号</text>
<text transform="translate(767 603.62) scale(0.42 1)" font-family="&quot;Liberation Sans&quot;, &quot;Noto Sans CJK SC&quot;, sans-serif" font-size="17" fill="#00ff00" text-anchor="middle" font-weight="bold" stroke="#00ff00" stroke-width="0.35">名称</text>
<text transform="translate(829 603.62) scale(0.42 1)" font-family="&quot;Liberation Sans&quot;, &quot;Noto Sans CJK SC&quot;, sans-serif" font-size="17" fill="#00ff00" text-anchor="middle" font-weight="bold" stroke="#00ff00" stroke-width="0.35">数量</text>
<text transform="translate(884 603.62) scale(0.42 1)" font-family="&quot;Liberation Sans&quot;, &quot;Noto Sans CJK SC&quot;, sans-serif" font-size="17" fill="#00ff00" text-anchor="middle" font-weight="bold" stroke="#00ff00" stroke-width="0.35">材料</text>
<text transform="translate(941.5 592.82) scale(0.44 1)" font-family="&quot;Liberation Sans&quot;, &quot;Noto Sans CJK SC&quot;, sans-serif" font-size="12" fill="#00ff00" text-anchor="middle" font-weight="bold" stroke="#00ff00" stroke-width="0.35">单件</text>
<text transform="translate(968 592.82) scale(0.44 1)" font-family="&quot;Liberation Sans&quot;, &quot;Noto Sans CJK SC&quot;, sans-serif" font-size="12" fill="#00ff00" text-anchor="middle" font-weight="bold" stroke="#00ff00" stroke-width="0.35">总计</text>
<text transform="translate(956 609.64) scale(0.42 1)" font-family="&quot;Liberation Sans&quot;, &quot;Noto Sans CJK SC&quot;, sans-serif" font-size="11.5" fill="#00ff00" text-anchor="middle" font-weight="bold" stroke="#00ff00" stroke-width="0.35">重量</text>
<text transform="translate(1006 603.62) scale(0.42 1)" font-family="&quot;Liberation Sans&quot;, &quot;Noto Sans CJK SC&quot;, sans-serif" font-size="17" fill="#00ff00" text-anchor="middle" font-weight="bold" stroke="#00ff00" stroke-width="0.35">备注</text>
<text transform="translate(170.5 625.9) scale(0.48 1)" font-family="&quot;Liberation Sans&quot;, &quot;Noto Sans CJK SC&quot;, sans-serif" font-size="11.3" fill="#00ff00" text-anchor="start" font-weight="bold" stroke="#00ff00" stroke-width="0.35">23</text>
<text transform="translate(190 625.9) scale(0.53 1)" font-family="&quot;Liberation Sans&quot;, &quot;Noto Sans CJK SC&quot;, sans-serif" font-size="11.3" fill="#00ff00" text-anchor="start" font-weight="bold" stroke="#00ff00" stroke-width="0.35">M10x50 GB/T 70.1-2008</text>
<text transform="translate(285.8 626.8) scale(0.46 1)" font-family="&quot;Liberation Sans&quot;, &quot;Noto Sans CJK SC&quot;, sans-serif" font-size="12.6" fill="#00ff00" text-anchor="start" font-weight="bold" stroke="#00ff00" stroke-width="0.35">内六角圆柱头螺钉</text>
<text transform="translate(391.5 625.9) scale(0.48 1)" font-family="&quot;Liberation Sans&quot;, &quot;Noto Sans CJK SC&quot;, sans-serif" font-size="11.3" fill="#00ff00" text-anchor="start" font-weight="bold" stroke="#00ff00" stroke-width="0.35">3</text>
<text transform="translate(411 625.9) scale(0.48 1)" font-family="&quot;Liberation Sans&quot;, &quot;Noto Sans CJK SC&quot;, sans-serif" font-size="11.3" fill="#00ff00" text-anchor="start" font-weight="bold" stroke="#00ff00" stroke-width="0.35">8.8</text>
<text transform="translate(419 626.8) scale(0.46 1)" font-family="&quot;Liberation Sans&quot;, &quot;Noto Sans CJK SC&quot;, sans-serif" font-size="12.6" fill="#00ff00" text-anchor="start" font-weight="bold" stroke="#00ff00" stroke-width="0.35">级</text>
<text transform="translate(170.5 642.9) scale(0.48 1)" font-family="&quot;Liberation Sans&quot;, &quot;Noto Sans CJK SC&quot;, sans-serif" font-size="11.3" fill="#00ff00" text-anchor="start" font-weight="bold" stroke="#00ff00" stroke-width="0.35">22</text>
<text transform="translate(190 642.9) scale(0.53 1)" font-family="&quot;Liberation Sans&quot;, &quot;Noto Sans CJK SC&quot;, sans-serif" font-size="11.3" fill="#00ff00" text-anchor="start" font-weight="bold" stroke="#00ff00" stroke-width="0.35">M4x16 GB/T 70.1-2008</text>
<text transform="translate(285.8 643.8) scale(0.46 1)" font-family="&quot;Liberation Sans&quot;, &quot;Noto Sans CJK SC&quot;, sans-serif" font-size="12.6" fill="#00ff00" text-anchor="start" font-weight="bold" stroke="#00ff00" stroke-width="0.35">内六角圆柱头螺钉</text>
<text transform="translate(391.5 642.9) scale(0.48 1)" font-family="&quot;Liberation Sans&quot;, &quot;Noto Sans CJK SC&quot;, sans-serif" font-size="11.3" fill="#00ff00" text-anchor="start" font-weight="bold" stroke="#00ff00" stroke-width="0.35">4</text>
<text transform="translate(411 642.9) scale(0.48 1)" font-family="&quot;Liberation Sans&quot;, &quot;Noto Sans CJK SC&quot;, sans-serif" font-size="11.3" fill="#00ff00" text-anchor="start" font-weight="bold" stroke="#00ff00" stroke-width="0.35">8.8</text>
<text transform="translate(419 643.8) scale(0.46 1)" font-family="&quot;Liberation Sans&quot;, &quot;Noto Sans CJK SC&quot;, sans-serif" font-size="12.6" fill="#00ff00" text-anchor="start" font-weight="bold" stroke="#00ff00" stroke-width="0.35">级</text>
<text transform="translate(170.5 659.9) scale(0.48 1)" font-family="&quot;Liberation Sans&quot;, &quot;Noto Sans CJK SC&quot;, sans-serif" font-size="11.3" fill="#00ff00" text-anchor="start" font-weight="bold" stroke="#00ff00" stroke-width="0.35">21</text>
<text transform="translate(190 659.9) scale(0.53 1)" font-family="&quot;Liberation Sans&quot;, &quot;Noto Sans CJK SC&quot;, sans-serif" font-size="11.3" fill="#00ff00" text-anchor="start" font-weight="bold" stroke="#00ff00" stroke-width="0.35">M6x25 GB/T 70.1-2008</text>
<text transform="translate(285.8 660.8) scale(0.46 1)" font-family="&quot;Liberation Sans&quot;, &quot;Noto Sans CJK SC&quot;, sans-serif" font-size="12.6" fill="#00ff00" text-anchor="start" font-weight="bold" stroke="#00ff00" stroke-width="0.35">内六角圆柱头螺钉</text>
<text transform="translate(391.5 659.9) scale(0.48 1)" font-family="&quot;Liberation Sans&quot;, &quot;Noto Sans CJK SC&quot;, sans-serif" font-size="11.3" fill="#00ff00" text-anchor="start" font-weight="bold" stroke="#00ff00" stroke-width="0.35">4</text>
<text transform="translate(411 659.9) scale(0.48 1)" font-family="&quot;Liberation Sans&quot;, &quot;Noto Sans CJK SC&quot;, sans-serif" font-size="11.3" fill="#00ff00" text-anchor="start" font-weight="bold" stroke="#00ff00" stroke-width="0.35">8.8</text>
<text transform="translate(419 660.8) scale(0.46 1)" font-family="&quot;Liberation Sans&quot;, &quot;Noto Sans CJK SC&quot;, sans-serif" font-size="12.6" fill="#00ff00" text-anchor="start" font-weight="bold" stroke="#00ff00" stroke-width="0.35">级</text>
<text transform="translate(170.5 675.9) scale(0.48 1)" font-family="&quot;Liberation Sans&quot;, &quot;Noto Sans CJK SC&quot;, sans-serif" font-size="11.3" fill="#00ff00" text-anchor="start" font-weight="bold" stroke="#00ff00" stroke-width="0.35">20</text>
<text transform="translate(190 675.9) scale(0.53 1)" font-family="&quot;Liberation Sans&quot;, &quot;Noto Sans CJK SC&quot;, sans-serif" font-size="11.3" fill="#00ff00" text-anchor="start" font-weight="bold" stroke="#00ff00" stroke-width="0.35">M10x35 GB/T 70.1-2008</text>
<text transform="translate(285.8 676.8) scale(0.46 1)" font-family="&quot;Liberation Sans&quot;, &quot;Noto Sans CJK SC&quot;, sans-serif" font-size="12.6" fill="#00ff00" text-anchor="start" font-weight="bold" stroke="#00ff00" stroke-width="0.35">内六角圆柱头螺钉</text>
<text transform="translate(391.5 675.9) scale(0.48 1)" font-family="&quot;Liberation Sans&quot;, &quot;Noto Sans CJK SC&quot;, sans-serif" font-size="11.3" fill="#00ff00" text-anchor="start" font-weight="bold" stroke="#00ff00" stroke-width="0.35">2</text>
<text transform="translate(411 675.9) scale(0.48 1)" font-family="&quot;Liberation Sans&quot;, &quot;Noto Sans CJK SC&quot;, sans-serif" font-size="11.3" fill="#00ff00" text-anchor="start" font-weight="bold" stroke="#00ff00" stroke-width="0.35">8.8</text>
<text transform="translate(419 676.8) scale(0.46 1)" font-family="&quot;Liberation Sans&quot;, &quot;Noto Sans CJK SC&quot;, sans-serif" font-size="12.6" fill="#00ff00" text-anchor="start" font-weight="bold" stroke="#00ff00" stroke-width="0.35">级</text>
<text transform="translate(170.5 692.9) scale(0.48 1)" font-family="&quot;Liberation Sans&quot;, &quot;Noto Sans CJK SC&quot;, sans-serif" font-size="11.3" fill="#00ff00" text-anchor="start" font-weight="bold" stroke="#00ff00" stroke-width="0.35">19</text>
<text transform="translate(190 692.9) scale(0.53 1)" font-family="&quot;Liberation Sans&quot;, &quot;Noto Sans CJK SC&quot;, sans-serif" font-size="11.3" fill="#00ff00" text-anchor="start" font-weight="bold" stroke="#00ff00" stroke-width="0.35">M4x45 GB/T 70.1-2008</text>
<text transform="translate(285.8 693.8) scale(0.46 1)" font-family="&quot;Liberation Sans&quot;, &quot;Noto Sans CJK SC&quot;, sans-serif" font-size="12.6" fill="#00ff00" text-anchor="start" font-weight="bold" stroke="#00ff00" stroke-width="0.35">内六角圆柱头螺钉</text>
<text transform="translate(391.5 692.9) scale(0.48 1)" font-family="&quot;Liberation Sans&quot;, &quot;Noto Sans CJK SC&quot;, sans-serif" font-size="11.3" fill="#00ff00" text-anchor="start" font-weight="bold" stroke="#00ff00" stroke-width="0.35">4</text>
<text transform="translate(411 692.9) scale(0.48 1)" font-family="&quot;Liberation Sans&quot;, &quot;Noto Sans CJK SC&quot;, sans-serif" font-size="11.3" fill="#00ff00" text-anchor="start" font-weight="bold" stroke="#00ff00" stroke-width="0.35">8.8</text>
<text transform="translate(419 693.8) scale(0.46 1)" font-family="&quot;Liberation Sans&quot;, &quot;Noto Sans CJK SC&quot;, sans-serif" font-size="12.6" fill="#00ff00" text-anchor="start" font-weight="bold" stroke="#00ff00" stroke-width="0.35">级</text>
<text transform="translate(170.5 709.9) scale(0.48 1)" font-family="&quot;Liberation Sans&quot;, &quot;Noto Sans CJK SC&quot;, sans-serif" font-size="11.3" fill="#00ff00" text-anchor="start" font-weight="bold" stroke="#00ff00" stroke-width="0.35">18</text>
<text transform="translate(190 709.9) scale(0.53 1)" font-family="&quot;Liberation Sans&quot;, &quot;Noto Sans CJK SC&quot;, sans-serif" font-size="11.3" fill="#00ff00" text-anchor="start" font-weight="bold" stroke="#00ff00" stroke-width="0.35">M5x20 GB/T 70.1-2008</text>
<text transform="translate(285.8 710.8) scale(0.46 1)" font-family="&quot;Liberation Sans&quot;, &quot;Noto Sans CJK SC&quot;, sans-serif" font-size="12.6" fill="#00ff00" text-anchor="start" font-weight="bold" stroke="#00ff00" stroke-width="0.35">内六角圆柱头螺钉</text>
<text transform="translate(391.5 709.9) scale(0.48 1)" font-family="&quot;Liberation Sans&quot;, &quot;Noto Sans CJK SC&quot;, sans-serif" font-size="11.3" fill="#00ff00" text-anchor="start" font-weight="bold" stroke="#00ff00" stroke-width="0.35">4</text>
<text transform="translate(411 709.9) scale(0.48 1)" font-family="&quot;Liberation Sans&quot;, &quot;Noto Sans CJK SC&quot;, sans-serif" font-size="11.3" fill="#00ff00" text-anchor="start" font-weight="bold" stroke="#00ff00" stroke-width="0.35">8.8</text>
<text transform="translate(419 710.8) scale(0.46 1)" font-family="&quot;Liberation Sans&quot;, &quot;Noto Sans CJK SC&quot;, sans-serif" font-size="12.6" fill="#00ff00" text-anchor="start" font-weight="bold" stroke="#00ff00" stroke-width="0.35">级</text>
<text transform="translate(170.5 726.9) scale(0.48 1)" font-family="&quot;Liberation Sans&quot;, &quot;Noto Sans CJK SC&quot;, sans-serif" font-size="11.3" fill="#00ff00" text-anchor="start" font-weight="bold" stroke="#00ff00" stroke-width="0.35">17</text>
<text transform="translate(190 726.9) scale(0.53 1)" font-family="&quot;Liberation Sans&quot;, &quot;Noto Sans CJK SC&quot;, sans-serif" font-size="11.3" fill="#00ff00" text-anchor="start" font-weight="bold" stroke="#00ff00" stroke-width="0.35">M5x20 GB/T 70.1-2008</text>
<text transform="translate(285.8 727.8) scale(0.46 1)" font-family="&quot;Liberation Sans&quot;, &quot;Noto Sans CJK SC&quot;, sans-serif" font-size="12.6" fill="#00ff00" text-anchor="start" font-weight="bold" stroke="#00ff00" stroke-width="0.35">内六角圆柱头螺钉</text>
<text transform="translate(391.5 726.9) scale(0.48 1)" font-family="&quot;Liberation Sans&quot;, &quot;Noto Sans CJK SC&quot;, sans-serif" font-size="11.3" fill="#00ff00" text-anchor="start" font-weight="bold" stroke="#00ff00" stroke-width="0.35">4</text>
<text transform="translate(411 726.9) scale(0.48 1)" font-family="&quot;Liberation Sans&quot;, &quot;Noto Sans CJK SC&quot;, sans-serif" font-size="11.3" fill="#00ff00" text-anchor="start" font-weight="bold" stroke="#00ff00" stroke-width="0.35">8.8</text>
<text transform="translate(419 727.8) scale(0.46 1)" font-family="&quot;Liberation Sans&quot;, &quot;Noto Sans CJK SC&quot;, sans-serif" font-size="12.6" fill="#00ff00" text-anchor="start" font-weight="bold" stroke="#00ff00" stroke-width="0.35">级</text>
<text transform="translate(170.5 743.9) scale(0.48 1)" font-family="&quot;Liberation Sans&quot;, &quot;Noto Sans CJK SC&quot;, sans-serif" font-size="11.3" fill="#00ff00" text-anchor="start" font-weight="bold" stroke="#00ff00" stroke-width="0.35">16</text>
<text transform="translate(190 743.9) scale(0.53 1)" font-family="&quot;Liberation Sans&quot;, &quot;Noto Sans CJK SC&quot;, sans-serif" font-size="11.3" fill="#00ff00" text-anchor="start" font-weight="bold" stroke="#00ff00" stroke-width="0.35">M6x25 GB/T 70.1-2008</text>
<text transform="translate(285.8 744.8) scale(0.46 1)" font-family="&quot;Liberation Sans&quot;, &quot;Noto Sans CJK SC&quot;, sans-serif" font-size="12.6" fill="#00ff00" text-anchor="start" font-weight="bold" stroke="#00ff00" stroke-width="0.35">内六角圆柱头螺钉</text>
<text transform="translate(391.5 743.9) scale(0.48 1)" font-family="&quot;Liberation Sans&quot;, &quot;Noto Sans CJK SC&quot;, sans-serif" font-size="11.3" fill="#00ff00" text-anchor="start" font-weight="bold" stroke="#00ff00" stroke-width="0.35">4</text>
<text transform="translate(411 743.9) scale(0.48 1)" font-family="&quot;Liberation Sans&quot;, &quot;Noto Sans CJK SC&quot;, sans-serif" font-size="11.3" fill="#00ff00" text-anchor="start" font-weight="bold" stroke="#00ff00" stroke-width="0.35">8.8</text>
<text transform="translate(419 744.8) scale(0.46 1)" font-family="&quot;Liberation Sans&quot;, &quot;Noto Sans CJK SC&quot;, sans-serif" font-size="12.6" fill="#00ff00" text-anchor="start" font-weight="bold" stroke="#00ff00" stroke-width="0.35">级</text>
<text transform="translate(611 677.12) scale(0.66 1)" font-family="&quot;Liberation Sans&quot;, &quot;Noto Sans CJK SC&quot;, sans-serif" font-size="12" fill="#00ff00" text-anchor="middle" font-weight="bold" stroke="#00ff00" stroke-width="0.35">标记</text>
<text transform="translate(634.5 677.12) scale(0.66 1)" font-family="&quot;Liberation Sans&quot;, &quot;Noto Sans CJK SC&quot;, sans-serif" font-size="12" fill="#00ff00" text-anchor="middle" font-weight="bold" stroke="#00ff00" stroke-width="0.35">处数</text>
<text transform="translate(665.7 677.12) scale(0.66 1)" font-family="&quot;Liberation Sans&quot;, &quot;Noto Sans CJK SC&quot;, sans-serif" font-size="12" fill="#00ff00" text-anchor="middle" font-weight="bold" stroke="#00ff00" stroke-width="0.35">分区</text>
<text transform="translate(704.3 677.12) scale(0.61 1)" font-family="&quot;Liberation Sans&quot;, &quot;Noto Sans CJK SC&quot;, sans-serif" font-size="12" fill="#00ff00" text-anchor="middle" font-weight="bold" stroke="#00ff00" stroke-width="0.35">更改文件号</text>
<text transform="translate(737.7 677.12) scale(0.66 1)" font-family="&quot;Liberation Sans&quot;, &quot;Noto Sans CJK SC&quot;, sans-serif" font-size="12" fill="#00ff00" text-anchor="middle" font-weight="bold" stroke="#00ff00" stroke-width="0.35">签名</text>
<text transform="translate(771.5 677.12) scale(0.62 1)" font-family="&quot;Liberation Sans&quot;, &quot;Noto Sans CJK SC&quot;, sans-serif" font-size="12" fill="#00ff00" text-anchor="middle" font-weight="bold" stroke="#00ff00" stroke-width="0.35">年、月、日</text>
<text transform="translate(613 693.82) scale(0.66 1)" font-family="&quot;Liberation Sans&quot;, &quot;Noto Sans CJK SC&quot;, sans-serif" font-size="12" fill="#00ff00" text-anchor="middle" font-weight="bold" stroke="#00ff00" stroke-width="0.35">设计</text>
<text transform="translate(709.2 693.82) scale(0.66 1)" font-family="&quot;Liberation Sans&quot;, &quot;Noto Sans CJK SC&quot;, sans-serif" font-size="12" fill="#00ff00" text-anchor="middle" font-weight="bold" stroke="#00ff00" stroke-width="0.35">标准化</text>
<text transform="translate(613 727.32) scale(0.66 1)" font-family="&quot;Liberation Sans&quot;, &quot;Noto Sans CJK SC&quot;, sans-serif" font-size="12" fill="#00ff00" text-anchor="middle" font-weight="bold" stroke="#00ff00" stroke-width="0.35">审核</text>
<text transform="translate(613 744.32) scale(0.66 1)" font-family="&quot;Liberation Sans&quot;, &quot;Noto Sans CJK SC&quot;, sans-serif" font-size="12" fill="#00ff00" text-anchor="middle" font-weight="bold" stroke="#00ff00" stroke-width="0.35">工艺</text>
<text transform="translate(709.2 744.32) scale(0.66 1)" font-family="&quot;Liberation Sans&quot;, &quot;Noto Sans CJK SC&quot;, sans-serif" font-size="12" fill="#00ff00" text-anchor="middle" font-weight="bold" stroke="#00ff00" stroke-width="0.35">批准</text>
<text transform="translate(821.5 697.32) scale(0.68 1)" font-family="&quot;Liberation Sans&quot;, &quot;Noto Sans CJK SC&quot;, sans-serif" font-size="12" fill="#00ff00" text-anchor="middle" font-weight="bold" stroke="#00ff00" stroke-width="0.35">阶段标记</text>
<text transform="translate(867.3 697.32) scale(0.66 1)" font-family="&quot;Liberation Sans&quot;, &quot;Noto Sans CJK SC&quot;, sans-serif" font-size="12" fill="#00ff00" text-anchor="middle" font-weight="bold" stroke="#00ff00" stroke-width="0.35">重量</text>
<text transform="translate(895.8 697.32) scale(0.66 1)" font-family="&quot;Liberation Sans&quot;, &quot;Noto Sans CJK SC&quot;, sans-serif" font-size="12" fill="#00ff00" text-anchor="middle" font-weight="bold" stroke="#00ff00" stroke-width="0.35">比例</text>
<text transform="translate(895.8 719.5) scale(0.85 1)" font-family="&quot;Liberation Serif&quot;, &quot;Noto Serif CJK SC&quot;, serif" font-size="11" fill="#00ff00" text-anchor="middle" font-weight="bold">1:1</text>
<text transform="translate(802.9 741.82) scale(0.66 1)" font-family="&quot;Liberation Sans&quot;, &quot;Noto Sans CJK SC&quot;, sans-serif" font-size="12" fill="#00ff00" text-anchor="middle" font-weight="bold" stroke="#00ff00" stroke-width="0.35">共</text>
<text transform="translate(836 741.82) scale(0.66 1)" font-family="&quot;Liberation Sans&quot;, &quot;Noto Sans CJK SC&quot;, sans-serif" font-size="12" fill="#00ff00" text-anchor="middle" font-weight="bold" stroke="#00ff00" stroke-width="0.35">张</text>
<text transform="translate(864.9 741.82) scale(0.66 1)" font-family="&quot;Liberation Sans&quot;, &quot;Noto Sans CJK SC&quot;, sans-serif" font-size="12" fill="#00ff00" text-anchor="middle" font-weight="bold" stroke="#00ff00" stroke-width="0.35">第</text>
<text transform="translate(898.9 741.82) scale(0.66 1)" font-family="&quot;Liberation Sans&quot;, &quot;Noto Sans CJK SC&quot;, sans-serif" font-size="12" fill="#00ff00" text-anchor="middle" font-weight="bold" stroke="#00ff00" stroke-width="0.35">张</text>
<text transform="translate(970 682) scale(0.7 1)" font-family="&quot;Liberation Serif&quot;, &quot;Noto Serif CJK SC&quot;, serif" font-size="16.5" fill="#00ff00" text-anchor="middle" font-weight="bold">滚珠丝杠滑台</text>
<text transform="translate(970.5 718) scale(0.58 1)" font-family="&quot;Liberation Serif&quot;, &quot;Noto Serif CJK SC&quot;, serif" font-size="17.6" fill="#00ff00" text-anchor="middle" stroke="#00ff00" stroke-width="0.4">SN<tspan textLength="8.6" lengthAdjust="spacingAndGlyphs">-</tspan>HT<tspan textLength="17.2" lengthAdjust="spacingAndGlyphs">-</tspan>00</text>
<text transform="translate(67.5 601.48) scale(0.8 1)" font-family="&quot;Liberation Sans&quot;, &quot;Noto Sans CJK SC&quot;, sans-serif" font-size="8" fill="#00ff00" text-anchor="middle" font-weight="bold" letter-spacing="3.6" stroke="#00ff00" stroke-width="0.35">借(通)用</text>
<text transform="translate(69.5 613.08) scale(0.8 1)" font-family="&quot;Liberation Sans&quot;, &quot;Noto Sans CJK SC&quot;, sans-serif" font-size="8" fill="#00ff00" text-anchor="middle" font-weight="bold" letter-spacing="10" stroke="#00ff00" stroke-width="0.35">件登记</text>
<text transform="translate(65.5 637.08) scale(0.72 1)" font-family="&quot;Liberation Sans&quot;, &quot;Noto Sans CJK SC&quot;, sans-serif" font-size="8" fill="#00ff00" text-anchor="middle" font-weight="bold" stroke="#00ff00" stroke-width="0.35">旧底图总号</text>
<text transform="translate(66.7 661.38) scale(0.8 1)" font-family="&quot;Liberation Sans&quot;, &quot;Noto Sans CJK SC&quot;, sans-serif" font-size="8" fill="#00ff00" text-anchor="middle" font-weight="bold" letter-spacing="3" stroke="#00ff00" stroke-width="0.35">底图总号</text>
<text transform="translate(66.7 684.88) scale(0.8 1)" font-family="&quot;Liberation Sans&quot;, &quot;Noto Sans CJK SC&quot;, sans-serif" font-size="8" fill="#00ff00" text-anchor="middle" font-weight="bold" letter-spacing="3" stroke="#00ff00" stroke-width="0.35">签  字</text>
<text transform="translate(66.7 709.08) scale(0.8 1)" font-family="&quot;Liberation Sans&quot;, &quot;Noto Sans CJK SC&quot;, sans-serif" font-size="8" fill="#00ff00" text-anchor="middle" font-weight="bold" letter-spacing="3" stroke="#00ff00" stroke-width="0.35">日  期</text>
<text transform="translate(50.5 733.08) scale(0.72 1)" font-family="&quot;Liberation Sans&quot;, &quot;Noto Sans CJK SC&quot;, sans-serif" font-size="8" fill="#00ff00" text-anchor="middle" font-weight="bold" stroke="#00ff00" stroke-width="0.35">档案员</text>
<text transform="translate(80.5 733.08) scale(0.75 1)" font-family="&quot;Liberation Sans&quot;, &quot;Noto Sans CJK SC&quot;, sans-serif" font-size="8" fill="#00ff00" text-anchor="middle" font-weight="bold" stroke="#00ff00" stroke-width="0.35">日期</text>
</g>
</svg></body></html>
